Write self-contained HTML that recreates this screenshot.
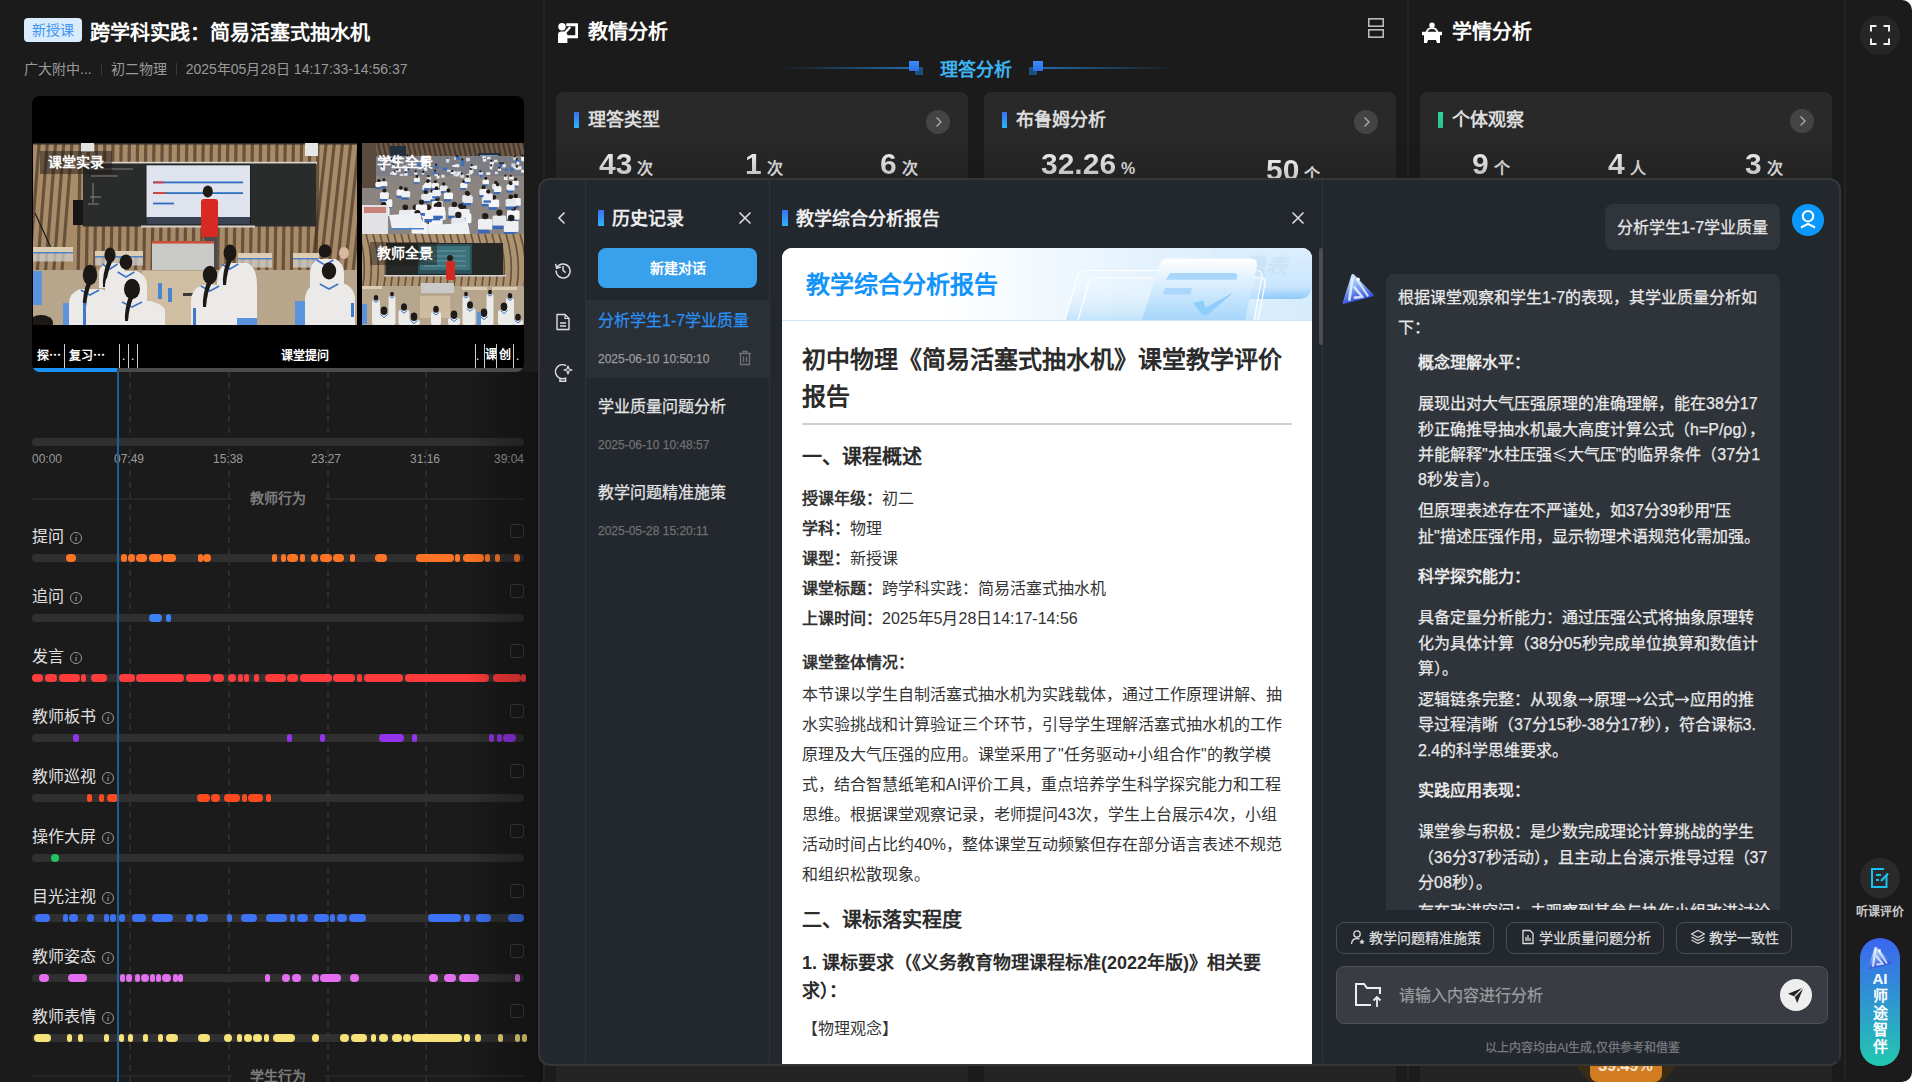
<!DOCTYPE html><html lang="zh-CN"><head><meta charset="utf-8"><title>课堂分析</title><style>
*{margin:0;padding:0;box-sizing:border-box}
html,body{width:1912px;height:1082px;overflow:hidden;background:#fff}
body{font-family:"Liberation Sans",sans-serif;color:#fff;position:relative}
.a{position:absolute;white-space:nowrap}

.ar{display:inline-block;transform:scaleX(1.9);margin:0 3px}
.le{display:inline-block;transform:scale(1.3,1.1);margin:0 2px}
#page{position:absolute;left:0;top:0;width:1912px;height:1082px;background:#1b1b1b;border-radius:0 10px 10px 0;overflow:hidden}
</style></head><body><div id="page">
<div class="a" style="left:24px;top:18px;width:58px;height:24px;background:#d9ecfd;border-radius:4px;color:#3d95f0;font-size:14px;line-height:24px;text-align:center">新授课</div>
<div class="a" style="left:90px;top:18px;font-size:20px;line-height:30px;font-weight:bold;color:#fff">跨学科实践：简易活塞式抽水机</div>
<div class="a" style="left:24px;top:58px;font-size:14px;line-height:22px;color:#9a9a9a">广大附中...<span style="display:inline-block;width:1px;height:12px;background:#3a3a3a;margin:0 9px;vertical-align:-1px"></span>初二物理<span style="display:inline-block;width:1px;height:12px;background:#3a3a3a;margin:0 9px;vertical-align:-1px"></span>2025年05月28日 14:17:33-14:56:37</div>
<div class="a" style="left:543px;top:0;width:2px;height:1082px;background:#242424"></div>
<div class="a" style="left:1407px;top:0;width:2px;height:1082px;background:#242424"></div>
<div class="a" style="left:1844px;top:0;width:2px;height:1082px;background:#242424"></div>
<div class="a" style="left:32px;top:96px;width:492px;height:276px;background:#000;border-radius:8px;overflow:hidden"><div class="a" style="left:1px;top:47px;width:324px;height:182px;overflow:hidden"><div style="filter:blur(0.5px)"><svg width="324" height="182" viewBox="0 0 324 182"><rect width="324" height="182" fill="#a88b68"/><polygon points="-20.0,0 -16.8,0 -26.8,127 -30.0,127" fill="#3e2c1c" opacity="0.6"/><polygon points="-11.8,0 -8.6,0 -18.6,127 -21.8,127" fill="#3e2c1c" opacity="0.6"/><polygon points="-3.6,0 -0.4,0 -10.4,127 -13.6,127" fill="#3e2c1c" opacity="0.6"/><polygon points="4.6,0 7.8,0 -2.2,127 -5.4,127" fill="#3e2c1c" opacity="0.6"/><polygon points="12.8,0 16.0,0 6.0,127 2.8,127" fill="#3e2c1c" opacity="0.6"/><polygon points="21.0,0 24.2,0 14.2,127 11.0,127" fill="#3e2c1c" opacity="0.6"/><polygon points="29.2,0 32.4,0 22.4,127 19.2,127" fill="#3e2c1c" opacity="0.6"/><polygon points="37.4,0 40.6,0 30.6,127 27.4,127" fill="#3e2c1c" opacity="0.6"/><polygon points="45.6,0 48.8,0 46.8,127 43.6,127" fill="#3e2c1c" opacity="0.6"/><polygon points="53.8,0 57.0,0 55.0,127 51.8,127" fill="#3e2c1c" opacity="0.6"/><polygon points="62.0,0 65.2,0 63.2,127 60.0,127" fill="#3e2c1c" opacity="0.6"/><polygon points="70.2,0 73.4,0 71.4,127 68.2,127" fill="#3e2c1c" opacity="0.6"/><polygon points="78.4,0 81.6,0 79.6,127 76.4,127" fill="#3e2c1c" opacity="0.6"/><polygon points="86.6,0 89.8,0 87.8,127 84.6,127" fill="#3e2c1c" opacity="0.6"/><polygon points="94.8,0 98.0,0 96.0,127 92.8,127" fill="#3e2c1c" opacity="0.6"/><polygon points="103.0,0 106.2,0 104.2,127 101.0,127" fill="#3e2c1c" opacity="0.6"/><polygon points="111.2,0 114.4,0 112.4,127 109.2,127" fill="#3e2c1c" opacity="0.6"/><polygon points="119.4,0 122.6,0 120.6,127 117.4,127" fill="#3e2c1c" opacity="0.6"/><polygon points="127.6,0 130.8,0 128.8,127 125.6,127" fill="#3e2c1c" opacity="0.6"/><polygon points="135.8,0 139.0,0 137.0,127 133.8,127" fill="#3e2c1c" opacity="0.6"/><polygon points="144.0,0 147.2,0 145.2,127 142.0,127" fill="#3e2c1c" opacity="0.6"/><polygon points="152.2,0 155.4,0 153.4,127 150.2,127" fill="#3e2c1c" opacity="0.6"/><polygon points="160.4,0 163.6,0 161.6,127 158.4,127" fill="#3e2c1c" opacity="0.6"/><polygon points="168.6,0 171.8,0 169.8,127 166.6,127" fill="#3e2c1c" opacity="0.6"/><polygon points="176.8,0 180.0,0 178.0,127 174.8,127" fill="#3e2c1c" opacity="0.6"/><polygon points="185.0,0 188.2,0 186.2,127 183.0,127" fill="#3e2c1c" opacity="0.6"/><polygon points="193.2,0 196.4,0 194.4,127 191.2,127" fill="#3e2c1c" opacity="0.6"/><polygon points="201.4,0 204.6,0 202.6,127 199.4,127" fill="#3e2c1c" opacity="0.6"/><polygon points="209.6,0 212.8,0 210.8,127 207.6,127" fill="#3e2c1c" opacity="0.6"/><polygon points="217.8,0 221.0,0 219.0,127 215.8,127" fill="#3e2c1c" opacity="0.6"/><polygon points="226.0,0 229.2,0 227.2,127 224.0,127" fill="#3e2c1c" opacity="0.6"/><polygon points="234.2,0 237.4,0 235.4,127 232.2,127" fill="#3e2c1c" opacity="0.6"/><polygon points="242.4,0 245.6,0 243.6,127 240.4,127" fill="#3e2c1c" opacity="0.6"/><polygon points="250.6,0 253.8,0 251.8,127 248.6,127" fill="#3e2c1c" opacity="0.6"/><polygon points="258.8,0 262.0,0 260.0,127 256.8,127" fill="#3e2c1c" opacity="0.6"/><polygon points="267.0,0 270.2,0 268.2,127 265.0,127" fill="#3e2c1c" opacity="0.6"/><polygon points="275.2,0 278.4,0 276.4,127 273.2,127" fill="#3e2c1c" opacity="0.6"/><polygon points="283.4,0 286.6,0 284.6,127 281.4,127" fill="#3e2c1c" opacity="0.6"/><polygon points="291.6,0 294.8,0 280.8,127 277.6,127" fill="#3e2c1c" opacity="0.6"/><polygon points="299.8,0 303.0,0 289.0,127 285.8,127" fill="#3e2c1c" opacity="0.6"/><polygon points="308.0,0 311.2,0 297.2,127 294.0,127" fill="#3e2c1c" opacity="0.6"/><polygon points="316.2,0 319.4,0 305.4,127 302.2,127" fill="#3e2c1c" opacity="0.6"/><polygon points="324.4,0 327.6,0 313.6,127 310.4,127" fill="#3e2c1c" opacity="0.6"/><polygon points="332.6,0 335.8,0 321.8,127 318.6,127" fill="#3e2c1c" opacity="0.6"/><polygon points="340.8,0 344.0,0 330.0,127 326.8,127" fill="#3e2c1c" opacity="0.6"/><rect x="0" y="0" width="324" height="1.5" fill="#2a2a2a"/><rect x="48" y="0" width="13" height="9" fill="#e2e2e2"/><rect x="272" y="0" width="13" height="13" fill="#e6e6e6"/><rect x="49" y="18.8" width="235" height="2" fill="#d6d6d2"/><rect x="50" y="20.5" width="233" height="63" fill="#2a2c2b"/><rect x="112.5" y="21.3" width="105.5" height="59.7" fill="#1c1e22"/><rect x="113.5" y="22.3" width="103.5" height="52" fill="#dfe3ee"/><rect x="113.5" y="74" width="103.5" height="7" fill="#3a4150"/><rect x="120" y="38.5" width="90" height="1.8" fill="#2f6fc0"/><rect x="120" y="38.5" width="11" height="1.8" fill="#d8403a"/><rect x="120" y="49.2" width="90" height="1.8" fill="#2f6fc0"/><rect x="120" y="49.2" width="13" height="1.8" fill="#d8403a"/><rect x="120" y="59.6" width="21" height="1.8" fill="#2f6fc0"/><path d="M55 26H100M58 33H85M60 40V60M57 54H68M55 61H66" stroke="#9a9a98" stroke-width="0.8" fill="none"/><rect x="40" y="57" width="10" height="25" fill="#161616"/><rect x="108" y="82.5" width="114" height="2" fill="#cfcfcf"/><path d="M2 70L18 105" stroke="#1a1a1a" stroke-width="1.2"/><rect x="0" y="127" width="324" height="55" fill="#b7a58c"/><ellipse cx="174.8" cy="48.6" rx="5" ry="6" fill="#231a16"/><rect x="168" y="56" width="17" height="39" rx="3" fill="#d82a22"/><rect x="171" y="94" width="13" height="32" fill="#4a4c50"/><rect x="119" y="98" width="62" height="4" fill="#c8503a"/><rect x="119" y="100.6" width="62" height="26.4" fill="#cacbc9"/><rect x="0" y="104" width="40" height="5" fill="#dccdb4"/><rect x="0" y="109" width="40" height="1.5" fill="#4a86d0"/><rect x="0" y="110.5" width="40" height="8" fill="#d6d6d4" opacity=".7"/><rect x="62" y="108" width="48" height="5" fill="#dccdb4"/><rect x="62" y="113" width="48" height="1.5" fill="#4a86d0"/><rect x="62" y="114.5" width="48" height="8" fill="#d6d6d4" opacity=".7"/><rect x="205" y="110" width="34" height="5" fill="#dccdb4"/><rect x="205" y="115" width="34" height="1.5" fill="#4a86d0"/><rect x="205" y="116.5" width="34" height="8" fill="#d6d6d4" opacity=".7"/><rect x="260" y="110" width="26" height="5" fill="#dccdb4"/><rect x="260" y="115" width="26" height="1.5" fill="#4a86d0"/><rect x="260" y="116.5" width="26" height="8" fill="#d6d6d4" opacity=".7"/><rect x="0" y="0" width="0" height="0"/><polygon points="110,128 180,128 188,182 100,182" fill="#cfbea2"/><rect x="125" y="140" width="4" height="16" fill="#4a86d0"/><rect x="135" y="145" width="4" height="14" fill="#4a86d0"/><rect x="150" y="150" width="12" height="3" fill="#3a3a3a"/><rect x="0" y="128" width="9" height="34" fill="#5b93dc"/><rect x="200" y="158" width="24" height="24" fill="#5b93dc"/><rect x="262" y="158" width="20" height="24" fill="#5b93dc"/><rect x="30" y="160" width="12" height="22" fill="#5b93dc"/><path d="M72.5 120H85.5Q92 124 92 130.0V145H66V130.0Q66 124 72.5 120Z" fill="#ebeae8"/><path d="M69.4 121L77.0 126L84.6 121" stroke="#3f74c4" stroke-width="1.6" fill="none"/><ellipse cx="77" cy="112" rx="5.6" ry="7.6" fill="#1b1816"/><path d="M75 116Q69 132 70 144L73 144Q74 130 79 119Z" fill="#1b1816"/><path d="M82.5 128H103.5Q114 132 114 141.6V162H72V141.6Q72 132 82.5 128Z" fill="#ebeae8"/><path d="M84.6 129L93.0 134L101.4 129" stroke="#3f74c4" stroke-width="1.6" fill="none"/><ellipse cx="93" cy="119" rx="6.4" ry="7.6" fill="#1b1816"/><path d="M194.0 120H214.0Q224 124 224 142.0V175H184V142.0Q184 124 194.0 120Z" fill="#ebeae8"/><path d="M188.6 121L197.0 126L205.4 121" stroke="#3f74c4" stroke-width="1.6" fill="none"/><ellipse cx="197" cy="110" rx="6.4" ry="8.5" fill="#1b1816"/><path d="M195 114Q189 130 190 142L193 142Q194 128 199 117Z" fill="#1b1816"/><path d="M285.5 116H302.5Q311 120 311 130.4V152H277V130.4Q277 120 285.5 116Z" fill="#ebeae8"/><path d="M283.6 117L292.0 122L300.4 117" stroke="#3f74c4" stroke-width="1.6" fill="none"/><ellipse cx="292" cy="108" rx="6.4" ry="6.8" fill="#1b1816"/><ellipse cx="311" cy="110" rx="5" ry="6" fill="#d8b8a0"/><path d="M47.0 146H69.0Q80 150 80 160.4V182H36V160.4Q36 150 47.0 146Z" fill="#ebeae8"/><path d="M47.8 147L57.0 152L66.2 147" stroke="#3f74c4" stroke-width="1.6" fill="none"/><ellipse cx="57" cy="132" rx="7.2" ry="10.2" fill="#1b1816"/><path d="M55 136Q49 152 50 164L53 164Q54 150 59 139Z" fill="#1b1816"/><path d="M88.5 158H117.5Q132 162 132 167.6V182H74V167.6Q74 162 88.5 158Z" fill="#ebeae8"/><path d="M89.0 159L99.0 164L109.0 159" stroke="#3f74c4" stroke-width="1.6" fill="none"/><ellipse cx="99" cy="146" rx="8.0" ry="10.2" fill="#1b1816"/><path d="M97 150Q91 166 92 178L95 178Q96 164 101 153Z" fill="#1b1816"/><path d="M169.5 142H192.5Q204 146 204 158.0V182H158V158.0Q158 146 169.5 142Z" fill="#ebeae8"/><path d="M167.8 143L177.0 148L186.2 143" stroke="#3f74c4" stroke-width="1.6" fill="none"/><ellipse cx="177" cy="132" rx="7.2" ry="9.3" fill="#1b1816"/><path d="M175 136Q169 152 170 164L173 164Q174 150 179 139Z" fill="#1b1816"/><path d="M284.5 140H309.5Q322 144 322 156.8V182H272V156.8Q272 144 284.5 140Z" fill="#ebeae8"/><path d="M286.8 141L296.0 146L305.2 141" stroke="#3f74c4" stroke-width="1.6" fill="none"/><ellipse cx="296" cy="128" rx="7.2" ry="8.5" fill="#1b1816"/><rect x="50" y="160" width="3" height="22" fill="#3f7ac8"/><rect x="160" y="165" width="3" height="17" fill="#3f7ac8"/><rect x="318" y="160" width="3" height="14" fill="#3f7ac8"/><ellipse cx="8" cy="180" rx="12" ry="8" fill="#1b1816"/></svg></div></div><div class="a" style="left:330px;top:47px;width:162px;height:91px;overflow:hidden"><div style="filter:blur(0.4px)"><svg width="162" height="91" viewBox="0 0 162 91"><rect width="162" height="91" fill="#8a8580"/><rect x="0" y="0" width="162" height="13" fill="#6e5a48"/><polygon points="0,0 2,0 5,13 3,13" fill="#3b2c22" opacity="0.75"/><polygon points="5,0 7,0 10,13 8,13" fill="#3b2c22" opacity="0.75"/><polygon points="10,0 12,0 15,13 13,13" fill="#3b2c22" opacity="0.75"/><polygon points="15,0 17,0 20,13 18,13" fill="#3b2c22" opacity="0.75"/><polygon points="20,0 22,0 25,13 23,13" fill="#3b2c22" opacity="0.75"/><polygon points="25,0 27,0 30,13 28,13" fill="#3b2c22" opacity="0.75"/><polygon points="30,0 32,0 35,13 33,13" fill="#3b2c22" opacity="0.75"/><polygon points="35,0 37,0 40,13 38,13" fill="#3b2c22" opacity="0.75"/><polygon points="40,0 42,0 45,13 43,13" fill="#3b2c22" opacity="0.75"/><polygon points="45,0 47,0 50,13 48,13" fill="#3b2c22" opacity="0.75"/><polygon points="50,0 52,0 55,13 53,13" fill="#3b2c22" opacity="0.75"/><polygon points="55,0 57,0 60,13 58,13" fill="#3b2c22" opacity="0.75"/><polygon points="60,0 62,0 65,13 63,13" fill="#3b2c22" opacity="0.75"/><polygon points="65,0 67,0 70,13 68,13" fill="#3b2c22" opacity="0.75"/><polygon points="70,0 72,0 75,13 73,13" fill="#3b2c22" opacity="0.75"/><polygon points="75,0 77,0 80,13 78,13" fill="#3b2c22" opacity="0.75"/><polygon points="80,0 82,0 85,13 83,13" fill="#3b2c22" opacity="0.75"/><polygon points="85,0 87,0 90,13 88,13" fill="#3b2c22" opacity="0.75"/><polygon points="90,0 92,0 95,13 93,13" fill="#3b2c22" opacity="0.75"/><polygon points="95,0 97,0 100,13 98,13" fill="#3b2c22" opacity="0.75"/><polygon points="100,0 102,0 105,13 103,13" fill="#3b2c22" opacity="0.75"/><polygon points="105,0 107,0 110,13 108,13" fill="#3b2c22" opacity="0.75"/><polygon points="110,0 112,0 115,13 113,13" fill="#3b2c22" opacity="0.75"/><polygon points="115,0 117,0 120,13 118,13" fill="#3b2c22" opacity="0.75"/><polygon points="120,0 122,0 125,13 123,13" fill="#3b2c22" opacity="0.75"/><polygon points="125,0 127,0 130,13 128,13" fill="#3b2c22" opacity="0.75"/><polygon points="130,0 132,0 135,13 133,13" fill="#3b2c22" opacity="0.75"/><polygon points="135,0 137,0 140,13 138,13" fill="#3b2c22" opacity="0.75"/><polygon points="140,0 142,0 145,13 143,13" fill="#3b2c22" opacity="0.75"/><polygon points="145,0 147,0 150,13 148,13" fill="#3b2c22" opacity="0.75"/><polygon points="150,0 152,0 155,13 153,13" fill="#3b2c22" opacity="0.75"/><polygon points="155,0 157,0 160,13 158,13" fill="#3b2c22" opacity="0.75"/><polygon points="160,0 162,0 165,13 163,13" fill="#3b2c22" opacity="0.75"/><rect x="0" y="0" width="14" height="45" fill="#5a4a3e"/><rect x="28" y="3" width="16" height="12" fill="#243040"/><rect x="116" y="10" width="22" height="10" fill="#233040"/><rect x="118" y="12" width="18" height="6" fill="#6a9ac0"/><rect x="14" y="13" width="148" height="20" fill="#7c7c84"/><rect x="81.0" y="24.8" width="4.3" height="2.7" fill="#3a6ec0"/><rect x="42.1" y="29.9" width="3.5" height="2.9" fill="#e2e6ee"/><circle cx="43.6" cy="29.1" r="1.1" fill="#221c18"/><rect x="58.9" y="14.9" width="4.1" height="3.0" fill="#eceef2"/><rect x="72.6" y="22.5" width="4.0" height="3.0" fill="#3a6ec0"/><circle cx="74.1" cy="21.7" r="1.1" fill="#221c18"/><rect x="92.2" y="14.3" width="2.9" height="2.4" fill="#eceef2"/><rect x="62.3" y="25.4" width="2.9" height="2.4" fill="#f4f4f6"/><circle cx="63.8" cy="24.6" r="1.1" fill="#221c18"/><rect x="112.0" y="22.6" width="3.1" height="3.5" fill="#eceef2"/><rect x="60.7" y="17.8" width="3.1" height="2.1" fill="#eceef2"/><circle cx="62.2" cy="17.0" r="1.1" fill="#221c18"/><rect x="139.3" y="21.1" width="4.4" height="3.3" fill="#eceef2"/><circle cx="140.8" cy="20.3" r="1.1" fill="#221c18"/><rect x="151.2" y="14.1" width="3.3" height="3.1" fill="#d4d8e0"/><circle cx="152.7" cy="13.3" r="1.1" fill="#221c18"/><rect x="107.2" y="29.3" width="3.0" height="2.1" fill="#f4f4f6"/><circle cx="108.7" cy="28.5" r="1.1" fill="#221c18"/><rect x="74.7" y="32.4" width="2.8" height="3.1" fill="#eceef2"/><circle cx="76.2" cy="31.6" r="1.1" fill="#221c18"/><rect x="132.0" y="16.7" width="3.6" height="2.7" fill="#e2e6ee"/><rect x="127.9" y="21.8" width="3.3" height="2.6" fill="#e2e6ee"/><circle cx="129.4" cy="21.0" r="1.1" fill="#221c18"/><rect x="141.9" y="33.5" width="3.7" height="3.5" fill="#eceef2"/><circle cx="143.4" cy="32.7" r="1.1" fill="#221c18"/><rect x="72.4" y="30.9" width="3.8" height="2.2" fill="#e2e6ee"/><circle cx="73.9" cy="30.1" r="1.1" fill="#221c18"/><rect x="52.2" y="29.2" width="3.2" height="2.4" fill="#eceef2"/><circle cx="53.7" cy="28.4" r="1.1" fill="#221c18"/><rect x="44.9" y="26.4" width="2.5" height="2.6" fill="#3a6ec0"/><circle cx="46.4" cy="25.6" r="1.1" fill="#221c18"/><rect x="156.0" y="23.2" width="3.6" height="3.3" fill="#e2e6ee"/><rect x="60.0" y="17.8" width="3.7" height="3.1" fill="#e2e6ee"/><rect x="153.2" y="17.1" width="4.4" height="3.3" fill="#3a6ec0"/><circle cx="154.7" cy="16.3" r="1.1" fill="#221c18"/><rect x="21.0" y="15.3" width="3.5" height="2.4" fill="#d4d8e0"/><circle cx="22.5" cy="14.5" r="1.1" fill="#221c18"/><rect x="135.9" y="25.5" width="3.1" height="2.3" fill="#eceef2"/><circle cx="137.4" cy="24.7" r="1.1" fill="#221c18"/><rect x="84.9" y="26.7" width="3.7" height="2.1" fill="#e2e6ee"/><rect x="44.2" y="13.3" width="3.0" height="2.7" fill="#eceef2"/><circle cx="45.7" cy="12.5" r="1.1" fill="#221c18"/><rect x="55.7" y="24.2" width="4.4" height="2.1" fill="#e2e6ee"/><rect x="159.1" y="26.8" width="3.9" height="2.9" fill="#e2e6ee"/><rect x="150.7" y="23.0" width="3.2" height="2.5" fill="#eceef2"/><circle cx="152.2" cy="22.2" r="1.1" fill="#221c18"/><rect x="108.2" y="23.1" width="4.0" height="2.5" fill="#eceef2"/><circle cx="109.7" cy="22.3" r="1.1" fill="#221c18"/><rect x="94.8" y="28.5" width="4.3" height="3.1" fill="#e2e6ee"/><rect x="149.4" y="20.4" width="3.9" height="3.4" fill="#d4d8e0"/><rect x="18.5" y="23.5" width="2.5" height="3.0" fill="#d4d8e0"/><rect x="104.1" y="14.7" width="3.8" height="3.5" fill="#d4d8e0"/><rect x="71.5" y="28.4" width="3.7" height="2.7" fill="#3a6ec0"/><circle cx="73.0" cy="27.6" r="1.1" fill="#221c18"/><rect x="125.0" y="13.6" width="3.7" height="2.7" fill="#e2e6ee"/><rect x="30.7" y="29.4" width="3.8" height="2.7" fill="#eceef2"/><circle cx="32.2" cy="28.6" r="1.1" fill="#221c18"/><rect x="35.2" y="25.8" width="3.5" height="3.1" fill="#f4f4f6"/><rect x="79.4" y="31.7" width="3.2" height="3.0" fill="#e2e6ee"/><rect x="132.9" y="28.8" width="2.9" height="2.3" fill="#e2e6ee"/><rect x="60.8" y="15.9" width="3.5" height="3.3" fill="#eceef2"/><rect x="154.6" y="18.8" width="2.8" height="2.7" fill="#f4f4f6"/><rect x="137.0" y="21.0" width="3.5" height="3.0" fill="#3a6ec0"/><circle cx="138.5" cy="20.2" r="1.1" fill="#221c18"/><rect x="25.1" y="13.7" width="4.2" height="2.1" fill="#f4f4f6"/><rect x="59.7" y="29.6" width="2.5" height="2.2" fill="#d4d8e0"/><circle cx="61.2" cy="28.8" r="1.1" fill="#221c18"/><rect x="127.8" y="18.6" width="4.1" height="3.2" fill="#eceef2"/><circle cx="129.3" cy="17.8" r="1.1" fill="#221c18"/><rect x="107.2" y="26.8" width="4.1" height="3.4" fill="#e2e6ee"/><circle cx="108.7" cy="26.0" r="1.1" fill="#221c18"/><rect x="84.3" y="16.8" width="2.5" height="2.7" fill="#eceef2"/><circle cx="85.8" cy="16.0" r="1.1" fill="#221c18"/><rect x="54.3" y="20.3" width="3.9" height="2.8" fill="#3a6ec0"/><rect x="37.6" y="30.8" width="3.9" height="2.3" fill="#d4d8e0"/><rect x="120.9" y="15.7" width="3.4" height="2.9" fill="#eceef2"/><circle cx="122.4" cy="14.9" r="1.1" fill="#221c18"/><rect x="98.2" y="31.5" width="4.1" height="3.4" fill="#d4d8e0"/><circle cx="99.7" cy="30.7" r="1.1" fill="#221c18"/><rect x="159.4" y="15.1" width="4.2" height="3.2" fill="#eceef2"/><circle cx="160.9" cy="14.3" r="1.1" fill="#221c18"/><rect x="147.2" y="33.6" width="4.5" height="2.8" fill="#f4f4f6"/><circle cx="148.7" cy="32.8" r="1.1" fill="#221c18"/><rect x="120.3" y="13.3" width="3.5" height="2.1" fill="#f4f4f6"/><rect x="127.7" y="23.2" width="2.6" height="3.2" fill="#eceef2"/><circle cx="129.2" cy="22.4" r="1.1" fill="#221c18"/><rect x="19.2" y="24.2" width="3.9" height="3.4" fill="#d4d8e0"/><circle cx="20.7" cy="23.4" r="1.1" fill="#221c18"/><rect x="90.4" y="28.2" width="4.2" height="3.0" fill="#d4d8e0"/><rect x="116.0" y="28.9" width="3.4" height="2.8" fill="#3a6ec0"/><rect x="91.4" y="30.7" width="3.6" height="2.5" fill="#d4d8e0"/><rect x="142.8" y="25.8" width="3.1" height="2.2" fill="#3a6ec0"/><rect x="98.8" y="17.2" width="3.6" height="2.8" fill="#3a6ec0"/><circle cx="100.3" cy="16.4" r="1.1" fill="#221c18"/><rect x="93.7" y="13.9" width="4.3" height="2.8" fill="#3a6ec0"/><circle cx="95.2" cy="13.1" r="1.1" fill="#221c18"/><rect x="27.8" y="16.5" width="4.4" height="2.7" fill="#d4d8e0"/><circle cx="29.3" cy="15.7" r="1.1" fill="#221c18"/><rect x="84.0" y="15.7" width="3.4" height="3.2" fill="#d4d8e0"/><rect x="30.1" y="21.8" width="2.6" height="2.4" fill="#eceef2"/><circle cx="31.6" cy="21.0" r="1.1" fill="#221c18"/><rect x="37.0" y="13.2" width="3.1" height="3.1" fill="#e2e6ee"/><rect x="29.5" y="28.3" width="2.7" height="2.8" fill="#f4f4f6"/><rect x="117.8" y="31.5" width="2.5" height="2.9" fill="#3a6ec0"/><rect x="93.7" y="31.1" width="3.6" height="2.3" fill="#e2e6ee"/><rect x="104.5" y="31.0" width="3.0" height="3.1" fill="#f4f4f6"/><rect x="60.7" y="19.6" width="4.3" height="2.3" fill="#e2e6ee"/><rect x="33.8" y="18.0" width="4.0" height="2.4" fill="#eceef2"/><circle cx="35.3" cy="17.2" r="1.1" fill="#221c18"/><rect x="153.3" y="24.4" width="3.9" height="2.3" fill="#eceef2"/><circle cx="154.8" cy="23.6" r="1.1" fill="#221c18"/><rect x="98.3" y="20.5" width="4.1" height="2.5" fill="#3a6ec0"/><rect x="64.8" y="34.0" width="4.2" height="3.2" fill="#d4d8e0"/><circle cx="66.3" cy="33.2" r="1.1" fill="#221c18"/><rect x="19.5" y="24.6" width="3.5" height="2.9" fill="#e2e6ee"/><circle cx="21.0" cy="23.8" r="1.1" fill="#221c18"/><rect x="31.0" y="16.6" width="2.8" height="2.4" fill="#eceef2"/><rect x="33.9" y="27.3" width="2.7" height="2.1" fill="#d4d8e0"/><circle cx="35.4" cy="26.5" r="1.1" fill="#221c18"/><rect x="90.3" y="22.0" width="3.7" height="2.0" fill="#eceef2"/><rect x="40.8" y="22.5" width="4.0" height="2.6" fill="#e2e6ee"/><rect x="28.0" y="29.6" width="3.1" height="2.1" fill="#d4d8e0"/><rect x="42.3" y="25.3" width="3.2" height="3.1" fill="#f4f4f6"/><rect x="124.2" y="29.3" width="4.1" height="2.6" fill="#f4f4f6"/><rect x="116.8" y="29.1" width="4.0" height="2.6" fill="#e2e6ee"/><circle cx="118.3" cy="28.3" r="1.1" fill="#221c18"/><rect x="64.6" y="22.8" width="2.5" height="2.5" fill="#3a6ec0"/><circle cx="66.1" cy="22.0" r="1.1" fill="#221c18"/><rect x="54.4" y="33.2" width="3.1" height="2.3" fill="#d4d8e0"/><rect x="92.9" y="21.2" width="4.5" height="3.0" fill="#eceef2"/><rect x="159.1" y="13.5" width="3.7" height="3.1" fill="#f4f4f6"/><circle cx="160.6" cy="12.7" r="1.1" fill="#221c18"/><rect x="88.7" y="29.0" width="3.8" height="2.0" fill="#f4f4f6"/><circle cx="90.2" cy="28.2" r="1.1" fill="#221c18"/><rect x="148.0" y="24.6" width="3.5" height="3.5" fill="#3a6ec0"/><rect x="19.9" y="56.2" width="10.4" height="7.8" rx="1.5" fill="#f5f5f7"/><rect x="19.9" y="64.0" width="8.4" height="2.6" fill="#3a68b8"/><circle cx="25.1" cy="54.1" r="2.3" fill="#231d19"/><rect x="15.6" y="63.9" width="12.0" height="9.0" rx="1.5" fill="#eef0f3"/><rect x="15.6" y="72.9" width="9.6" height="3.0" fill="#3a68b8"/><circle cx="21.6" cy="61.5" r="2.7" fill="#231d19"/><rect x="61.0" y="80.9" width="15.4" height="11.5" rx="1.5" fill="#e6e9ee"/><rect x="61.0" y="92.5" width="12.3" height="3.8" fill="#3a68b8"/><circle cx="68.7" cy="77.9" r="3.5" fill="#231d19"/><rect x="77.9" y="42.5" width="7.7" height="5.8" rx="1.5" fill="#e6e9ee"/><rect x="77.9" y="48.2" width="6.2" height="1.9" fill="#3a68b8"/><circle cx="81.7" cy="40.9" r="1.7" fill="#231d19"/><rect x="86.4" y="63.8" width="12.0" height="9.0" rx="1.5" fill="#e6e9ee"/><rect x="86.4" y="72.8" width="9.6" height="3.0" fill="#3a68b8"/><circle cx="92.4" cy="61.4" r="2.7" fill="#231d19"/><rect x="148.6" y="55.0" width="10.2" height="7.7" rx="1.5" fill="#f5f5f7"/><rect x="148.6" y="62.7" width="8.2" height="2.6" fill="#3a68b8"/><circle cx="153.7" cy="53.0" r="2.3" fill="#231d19"/><rect x="66.0" y="49.6" width="9.1" height="6.8" rx="1.5" fill="#f5f5f7"/><rect x="66.0" y="56.5" width="7.3" height="2.3" fill="#3a68b8"/><circle cx="70.6" cy="47.8" r="2.1" fill="#231d19"/><rect x="47.2" y="66.8" width="12.6" height="9.4" rx="1.5" fill="#f5f5f7"/><rect x="47.2" y="76.2" width="10.0" height="3.1" fill="#3a68b8"/><circle cx="53.4" cy="64.2" r="2.8" fill="#231d19"/><rect x="145.0" y="67.2" width="12.6" height="9.5" rx="1.5" fill="#f5f5f7"/><rect x="145.0" y="76.7" width="10.1" height="3.2" fill="#3a68b8"/><circle cx="151.3" cy="64.7" r="2.8" fill="#231d19"/><rect x="51.9" y="34.7" width="6.1" height="4.6" rx="1.5" fill="#eef0f3"/><rect x="51.9" y="39.3" width="4.9" height="1.5" fill="#3a68b8"/><circle cx="55.0" cy="33.5" r="1.4" fill="#231d19"/><rect x="92.9" y="65.6" width="12.3" height="9.2" rx="1.5" fill="#e6e9ee"/><rect x="92.9" y="74.9" width="9.9" height="3.1" fill="#3a68b8"/><circle cx="99.0" cy="63.2" r="2.8" fill="#231d19"/><rect x="119.8" y="53.5" width="9.9" height="7.4" rx="1.5" fill="#e6e9ee"/><rect x="119.8" y="60.9" width="7.9" height="2.5" fill="#3a68b8"/><circle cx="124.7" cy="51.5" r="2.2" fill="#231d19"/><rect x="120.5" y="36.5" width="6.5" height="4.9" rx="1.5" fill="#f5f5f7"/><rect x="120.5" y="41.4" width="5.2" height="1.6" fill="#3a68b8"/><circle cx="123.8" cy="35.2" r="1.5" fill="#231d19"/><rect x="150.2" y="37.7" width="6.7" height="5.1" rx="1.5" fill="#eef0f3"/><rect x="150.2" y="42.7" width="5.4" height="1.7" fill="#3a68b8"/><circle cx="153.6" cy="36.3" r="1.5" fill="#231d19"/><rect x="69.9" y="57.9" width="10.8" height="8.1" rx="1.5" fill="#eef0f3"/><rect x="69.9" y="66.0" width="8.6" height="2.7" fill="#3a68b8"/><circle cx="75.3" cy="55.7" r="2.4" fill="#231d19"/><rect x="13.4" y="38.9" width="7.0" height="5.2" rx="1.5" fill="#f5f5f7"/><rect x="13.4" y="44.2" width="5.6" height="1.7" fill="#3a68b8"/><circle cx="16.9" cy="37.5" r="1.6" fill="#231d19"/><rect x="144.5" y="41.2" width="7.4" height="5.6" rx="1.5" fill="#eef0f3"/><rect x="144.5" y="46.8" width="6.0" height="1.9" fill="#3a68b8"/><circle cx="148.2" cy="39.7" r="1.7" fill="#231d19"/><rect x="98.2" y="39.8" width="7.2" height="5.4" rx="1.5" fill="#f5f5f7"/><rect x="98.2" y="45.1" width="5.7" height="1.8" fill="#3a68b8"/><circle cx="101.8" cy="38.3" r="1.6" fill="#231d19"/><rect x="69.8" y="39.9" width="7.2" height="5.4" rx="1.5" fill="#eef0f3"/><rect x="69.8" y="45.3" width="5.7" height="1.8" fill="#3a68b8"/><circle cx="73.4" cy="38.5" r="1.6" fill="#231d19"/><rect x="60.4" y="41.7" width="7.5" height="5.7" rx="1.5" fill="#e6e9ee"/><rect x="60.4" y="47.4" width="6.0" height="1.9" fill="#3a68b8"/><circle cx="64.2" cy="40.2" r="1.7" fill="#231d19"/><rect x="71.0" y="67.4" width="12.7" height="9.5" rx="1.5" fill="#e6e9ee"/><rect x="71.0" y="76.9" width="10.1" height="3.2" fill="#3a68b8"/><circle cx="77.3" cy="64.9" r="2.9" fill="#231d19"/><rect x="95.2" y="66.0" width="12.4" height="9.3" rx="1.5" fill="#f5f5f7"/><rect x="95.2" y="75.3" width="9.9" height="3.1" fill="#3a68b8"/><circle cx="101.4" cy="63.5" r="2.8" fill="#231d19"/><rect x="66.9" y="72.9" width="13.8" height="10.3" rx="1.5" fill="#f5f5f7"/><rect x="66.9" y="83.2" width="11.0" height="3.4" fill="#3a68b8"/><circle cx="73.8" cy="70.1" r="3.1" fill="#231d19"/><rect x="130.2" y="40.8" width="7.4" height="5.5" rx="1.5" fill="#e6e9ee"/><rect x="130.2" y="46.4" width="5.9" height="1.8" fill="#3a68b8"/><circle cx="133.9" cy="39.4" r="1.7" fill="#231d19"/><rect x="117.4" y="45.9" width="8.4" height="6.3" rx="1.5" fill="#eef0f3"/><rect x="117.4" y="52.2" width="6.7" height="2.1" fill="#3a68b8"/><circle cx="121.6" cy="44.2" r="1.9" fill="#231d19"/><rect x="81.9" y="49.4" width="9.1" height="6.8" rx="1.5" fill="#f5f5f7"/><rect x="81.9" y="56.2" width="7.3" height="2.3" fill="#3a68b8"/><circle cx="86.4" cy="47.6" r="2.0" fill="#231d19"/><rect x="100.2" y="52.0" width="9.6" height="7.2" rx="1.5" fill="#e6e9ee"/><rect x="100.2" y="59.2" width="7.7" height="2.4" fill="#3a68b8"/><circle cx="105.0" cy="50.0" r="2.2" fill="#231d19"/><rect x="96.1" y="70.3" width="13.3" height="9.9" rx="1.5" fill="#f5f5f7"/><rect x="96.1" y="80.2" width="10.6" height="3.3" fill="#3a68b8"/><circle cx="102.7" cy="67.6" r="3.0" fill="#231d19"/><rect x="93.8" y="65.7" width="12.3" height="9.2" rx="1.5" fill="#eef0f3"/><rect x="93.8" y="74.9" width="9.9" height="3.1" fill="#3a68b8"/><circle cx="99.9" cy="63.2" r="2.8" fill="#231d19"/><rect x="34.6" y="46.4" width="8.5" height="6.4" rx="1.5" fill="#f5f5f7"/><rect x="34.6" y="52.8" width="6.8" height="2.1" fill="#3a68b8"/><circle cx="38.9" cy="44.8" r="1.9" fill="#231d19"/><rect x="141.8" y="77.9" width="14.8" height="11.1" rx="1.5" fill="#eef0f3"/><rect x="141.8" y="89.0" width="11.8" height="3.7" fill="#3a68b8"/><circle cx="149.2" cy="75.0" r="3.3" fill="#231d19"/><rect x="102.5" y="34.5" width="6.1" height="4.6" rx="1.5" fill="#e6e9ee"/><rect x="102.5" y="39.0" width="4.9" height="1.5" fill="#3a68b8"/><circle cx="105.5" cy="33.3" r="1.4" fill="#231d19"/><rect x="68.5" y="65.2" width="12.2" height="9.2" rx="1.5" fill="#eef0f3"/><rect x="68.5" y="74.3" width="9.8" height="3.1" fill="#3a68b8"/><circle cx="74.6" cy="62.7" r="2.8" fill="#231d19"/><rect x="39.4" y="47.9" width="8.8" height="6.6" rx="1.5" fill="#eef0f3"/><rect x="39.4" y="54.5" width="7.0" height="2.2" fill="#3a68b8"/><circle cx="43.8" cy="46.2" r="2.0" fill="#231d19"/><rect x="145.0" y="42.0" width="7.6" height="5.7" rx="1.5" fill="#eef0f3"/><rect x="145.0" y="47.7" width="6.1" height="1.9" fill="#3a68b8"/><circle cx="148.8" cy="40.5" r="1.7" fill="#231d19"/><rect x="101.1" y="52.7" width="9.7" height="7.3" rx="1.5" fill="#e6e9ee"/><rect x="101.1" y="60.0" width="7.8" height="2.4" fill="#3a68b8"/><circle cx="105.9" cy="50.7" r="2.2" fill="#231d19"/><rect x="59.1" y="50.9" width="9.4" height="7.0" rx="1.5" fill="#e6e9ee"/><rect x="59.1" y="57.9" width="7.5" height="2.3" fill="#3a68b8"/><circle cx="63.8" cy="49.0" r="2.1" fill="#231d19"/><rect x="116.0" y="75.9" width="14.4" height="10.8" rx="1.5" fill="#eef0f3"/><rect x="116.0" y="86.7" width="11.5" height="3.6" fill="#3a68b8"/><circle cx="123.2" cy="73.1" r="3.2" fill="#231d19"/><rect x="126.7" y="56.4" width="10.5" height="7.9" rx="1.5" fill="#f5f5f7"/><rect x="126.7" y="64.2" width="8.4" height="2.6" fill="#3a68b8"/><circle cx="131.9" cy="54.3" r="2.4" fill="#231d19"/><rect x="130.5" y="72.4" width="13.7" height="10.3" rx="1.5" fill="#e6e9ee"/><rect x="130.5" y="82.7" width="11.0" height="3.4" fill="#3a68b8"/><circle cx="137.4" cy="69.7" r="3.1" fill="#231d19"/><rect x="70.2" y="46.9" width="8.6" height="6.4" rx="1.5" fill="#eef0f3"/><rect x="70.2" y="53.3" width="6.9" height="2.1" fill="#3a68b8"/><circle cx="74.5" cy="45.2" r="1.9" fill="#231d19"/><rect x="59.8" y="66.7" width="12.5" height="9.4" rx="1.5" fill="#f5f5f7"/><rect x="59.8" y="76.1" width="10.0" height="3.1" fill="#3a68b8"/><circle cx="66.1" cy="64.2" r="2.8" fill="#231d19"/><rect x="53.7" y="61.4" width="11.5" height="8.6" rx="1.5" fill="#f5f5f7"/><rect x="53.7" y="70.0" width="9.2" height="2.9" fill="#3a68b8"/><circle cx="59.5" cy="59.1" r="2.6" fill="#231d19"/><rect x="131.7" y="43.2" width="7.8" height="5.9" rx="1.5" fill="#f5f5f7"/><rect x="131.7" y="49.1" width="6.3" height="2.0" fill="#3a68b8"/><circle cx="135.6" cy="41.6" r="1.8" fill="#231d19"/><rect x="62.6" y="38.9" width="7.0" height="5.2" rx="1.5" fill="#e6e9ee"/><rect x="62.6" y="44.1" width="5.6" height="1.7" fill="#3a68b8"/><circle cx="66.1" cy="37.5" r="1.6" fill="#231d19"/><rect x="18.5" y="38.2" width="6.8" height="5.1" rx="1.5" fill="#f5f5f7"/><rect x="18.5" y="43.3" width="5.5" height="1.7" fill="#3a68b8"/><circle cx="21.9" cy="36.8" r="1.5" fill="#231d19"/><rect x="89.3" y="74.8" width="14.2" height="10.6" rx="1.5" fill="#e6e9ee"/><rect x="89.3" y="85.4" width="11.3" height="3.5" fill="#3a68b8"/><circle cx="96.3" cy="71.9" r="3.2" fill="#231d19"/><rect x="48.6" y="72.8" width="13.8" height="10.3" rx="1.5" fill="#eef0f3"/><rect x="48.6" y="83.1" width="11.0" height="3.4" fill="#3a68b8"/><circle cx="55.4" cy="70.0" r="3.1" fill="#231d19"/><rect x="49.6" y="79.5" width="15.1" height="11.3" rx="1.5" fill="#f5f5f7"/><rect x="49.6" y="90.9" width="12.1" height="3.8" fill="#3a68b8"/><circle cx="57.1" cy="76.5" r="3.4" fill="#231d19"/><rect x="17.9" y="49.2" width="9.0" height="6.8" rx="1.5" fill="#f5f5f7"/><rect x="17.9" y="56.0" width="7.2" height="2.3" fill="#3a68b8"/><circle cx="22.4" cy="47.4" r="2.0" fill="#231d19"/><rect x="121.5" y="50.4" width="9.3" height="7.0" rx="1.5" fill="#eef0f3"/><rect x="121.5" y="57.4" width="7.4" height="2.3" fill="#3a68b8"/><circle cx="126.2" cy="48.5" r="2.1" fill="#231d19"/><rect x="37.0" y="66.9" width="12.6" height="9.4" rx="1.5" fill="#e6e9ee"/><rect x="37.0" y="76.3" width="10.1" height="3.1" fill="#3a68b8"/><circle cx="43.3" cy="64.3" r="2.8" fill="#231d19"/><rect x="62.1" y="39.9" width="7.2" height="5.4" rx="1.5" fill="#f5f5f7"/><rect x="62.1" y="45.2" width="5.7" height="1.8" fill="#3a68b8"/><circle cx="65.7" cy="38.4" r="1.6" fill="#231d19"/><rect x="71.1" y="63.7" width="11.9" height="9.0" rx="1.5" fill="#f5f5f7"/><rect x="71.1" y="72.7" width="9.6" height="3.0" fill="#3a68b8"/><circle cx="77.0" cy="61.3" r="2.7" fill="#231d19"/><rect x="143.6" y="55.9" width="10.4" height="7.8" rx="1.5" fill="#e6e9ee"/><rect x="143.6" y="63.7" width="8.3" height="2.6" fill="#3a68b8"/><circle cx="148.8" cy="53.8" r="2.3" fill="#231d19"/><rect x="0" y="62" width="26" height="29" fill="#e2e2e4"/><rect x="2" y="64" width="22" height="6" fill="#b8432e" opacity=".6"/><polygon points="27,72 58,70 62,84 30,86" fill="#eef0f4"/><polygon points="66,82 106,80 108,91 68,91" fill="#eef0f4"/><rect x="27" y="85" width="35" height="1.5" fill="#4a86d0"/></svg></div></div><div class="a" style="left:330px;top:138px;width:162px;height:91px;overflow:hidden"><div style="filter:blur(0.4px)"><svg width="162" height="91" viewBox="0 0 162 91"><rect width="162" height="91" fill="#ad9372"/><path d="M-10 0Q-2 25 -6 52" stroke="#4e3a28" stroke-width="1.6" fill="none" opacity="0.75"/><path d="M-3 0Q5 25 1 52" stroke="#4e3a28" stroke-width="1.6" fill="none" opacity="0.75"/><path d="M4 0Q12 25 8 52" stroke="#4e3a28" stroke-width="1.6" fill="none" opacity="0.75"/><path d="M11 0Q19 25 15 52" stroke="#4e3a28" stroke-width="1.6" fill="none" opacity="0.75"/><path d="M18 0Q26 25 22 52" stroke="#4e3a28" stroke-width="1.6" fill="none" opacity="0.75"/><path d="M25 0Q33 25 29 52" stroke="#4e3a28" stroke-width="1.6" fill="none" opacity="0.75"/><path d="M32 0Q40 25 36 52" stroke="#4e3a28" stroke-width="1.6" fill="none" opacity="0.75"/><path d="M39 0Q47 25 43 52" stroke="#4e3a28" stroke-width="1.6" fill="none" opacity="0.75"/><path d="M46 0Q54 25 50 52" stroke="#4e3a28" stroke-width="1.6" fill="none" opacity="0.75"/><path d="M53 0Q61 25 57 52" stroke="#4e3a28" stroke-width="1.6" fill="none" opacity="0.75"/><path d="M60 0Q68 25 64 52" stroke="#4e3a28" stroke-width="1.6" fill="none" opacity="0.75"/><path d="M67 0Q75 25 71 52" stroke="#4e3a28" stroke-width="1.6" fill="none" opacity="0.75"/><path d="M74 0Q82 25 78 52" stroke="#4e3a28" stroke-width="1.6" fill="none" opacity="0.75"/><path d="M81 0Q89 25 85 52" stroke="#4e3a28" stroke-width="1.6" fill="none" opacity="0.75"/><path d="M88 0Q96 25 92 52" stroke="#4e3a28" stroke-width="1.6" fill="none" opacity="0.75"/><path d="M95 0Q103 25 99 52" stroke="#4e3a28" stroke-width="1.6" fill="none" opacity="0.75"/><path d="M102 0Q110 25 106 52" stroke="#4e3a28" stroke-width="1.6" fill="none" opacity="0.75"/><path d="M109 0Q117 25 113 52" stroke="#4e3a28" stroke-width="1.6" fill="none" opacity="0.75"/><path d="M116 0Q124 25 120 52" stroke="#4e3a28" stroke-width="1.6" fill="none" opacity="0.75"/><path d="M123 0Q131 25 127 52" stroke="#4e3a28" stroke-width="1.6" fill="none" opacity="0.75"/><path d="M130 0Q138 25 134 52" stroke="#4e3a28" stroke-width="1.6" fill="none" opacity="0.75"/><path d="M137 0Q145 25 141 52" stroke="#4e3a28" stroke-width="1.6" fill="none" opacity="0.75"/><path d="M144 0Q152 25 148 52" stroke="#4e3a28" stroke-width="1.6" fill="none" opacity="0.75"/><path d="M151 0Q159 25 155 52" stroke="#4e3a28" stroke-width="1.6" fill="none" opacity="0.75"/><path d="M158 0Q166 25 162 52" stroke="#4e3a28" stroke-width="1.6" fill="none" opacity="0.75"/><path d="M165 0Q173 25 169 52" stroke="#4e3a28" stroke-width="1.6" fill="none" opacity="0.75"/><rect x="24" y="9" width="117" height="32" fill="#262827"/><rect x="56" y="10" width="54" height="30" fill="#2c5058"/><rect x="58" y="12" width="50" height="24" fill="#3f7480" opacity=".9"/><path d="M62 17H104M62 22H104M62 27H104M62 32H104" stroke="#9ac4cc" stroke-width="0.8" opacity=".6"/><rect x="22" y="41" width="122" height="1.5" fill="#d0d0d0"/><circle cx="88" cy="24" r="3" fill="#231a16"/><rect x="84" y="27" width="9" height="19" rx="2" fill="#d22a22"/><rect x="0" y="52" width="162" height="39" fill="#b7a68e"/><rect x="59" y="49" width="33" height="10" fill="#cacbc9"/><rect x="0" y="52" width="20" height="3" fill="#dccdb4"/><rect x="100" y="53" width="25" height="3" fill="#dccdb4"/><rect x="130" y="53" width="25" height="3" fill="#dccdb4"/><rect x="58" y="62" width="30" height="22" fill="#cdbca0"/><rect x="10" y="66" width="8" height="25" rx="2" fill="#ebebea"/><path d="M11.6 66.5L14 68.4L16.4 66.5" stroke="#3f74c4" stroke-width="1" fill="none"/><ellipse cx="14" cy="63.8" rx="2.2" ry="2.8" fill="#1d1a18"/><rect x="26.5" y="62" width="7.0" height="29" rx="2" fill="#ebebea"/><path d="M27.9 62.5L30 64.1L32.1 62.5" stroke="#3f74c4" stroke-width="1" fill="none"/><ellipse cx="30" cy="60.1" rx="1.9" ry="2.4" fill="#1d1a18"/><rect x="100.5" y="62" width="7.0" height="29" rx="2" fill="#ebebea"/><path d="M101.9 62.5L104 64.1L106.1 62.5" stroke="#3f74c4" stroke-width="1" fill="none"/><ellipse cx="104" cy="60.1" rx="1.9" ry="2.4" fill="#1d1a18"/><rect x="124.5" y="60" width="7.0" height="31" rx="2" fill="#ebebea"/><path d="M125.9 60.5L128 62.1L130.1 60.5" stroke="#3f74c4" stroke-width="1" fill="none"/><ellipse cx="128" cy="58.1" rx="1.9" ry="2.4" fill="#1d1a18"/><rect x="144" y="64" width="8" height="27" rx="2" fill="#ebebea"/><path d="M145.6 64.5L148 66.4L150.4 64.5" stroke="#3f74c4" stroke-width="1" fill="none"/><ellipse cx="148" cy="61.8" rx="2.2" ry="2.8" fill="#1d1a18"/><rect x="16" y="80" width="12" height="11" rx="2" fill="#ebebea"/><path d="M18.4 80.5L22 83.6L25.6 80.5" stroke="#3f74c4" stroke-width="1" fill="none"/><ellipse cx="22" cy="76.7" rx="3.3" ry="4.2" fill="#1d1a18"/><rect x="36.5" y="76" width="11.0" height="15" rx="2" fill="#ebebea"/><path d="M38.7 76.5L42 79.3L45.3 76.5" stroke="#3f74c4" stroke-width="1" fill="none"/><ellipse cx="42" cy="73.0" rx="3.0" ry="3.8" fill="#1d1a18"/><rect x="46" y="86" width="12" height="5" rx="2" fill="#ebebea"/><path d="M48.4 86.5L52 89.6L55.6 86.5" stroke="#3f74c4" stroke-width="1" fill="none"/><ellipse cx="52" cy="82.7" rx="3.3" ry="4.2" fill="#1d1a18"/><rect x="69" y="78" width="10" height="13" rx="2" fill="#ebebea"/><path d="M71.0 78.5L74 81.0L77.0 78.5" stroke="#3f74c4" stroke-width="1" fill="none"/><ellipse cx="74" cy="75.2" rx="2.8" ry="3.5" fill="#1d1a18"/><rect x="86" y="84" width="12" height="7" rx="2" fill="#ebebea"/><path d="M88.4 84.5L92 87.6L95.6 84.5" stroke="#3f74c4" stroke-width="1" fill="none"/><ellipse cx="92" cy="80.7" rx="3.3" ry="4.2" fill="#1d1a18"/><rect x="102.5" y="74" width="11.0" height="17" rx="2" fill="#ebebea"/><path d="M104.7 74.5L108 77.3L111.3 74.5" stroke="#3f74c4" stroke-width="1" fill="none"/><ellipse cx="108" cy="71.0" rx="3.0" ry="3.8" fill="#1d1a18"/><rect x="116" y="82" width="12" height="9" rx="2" fill="#ebebea"/><path d="M118.4 82.5L122 85.6L125.6 82.5" stroke="#3f74c4" stroke-width="1" fill="none"/><ellipse cx="122" cy="78.7" rx="3.3" ry="4.2" fill="#1d1a18"/><rect x="136" y="76" width="12" height="15" rx="2" fill="#ebebea"/><path d="M138.4 76.5L142 79.6L145.6 76.5" stroke="#3f74c4" stroke-width="1" fill="none"/><ellipse cx="142" cy="72.7" rx="3.3" ry="4.2" fill="#1d1a18"/><rect x="151" y="86" width="10" height="5" rx="2" fill="#ebebea"/><path d="M153.0 86.5L156 89.0L159.0 86.5" stroke="#3f74c4" stroke-width="1" fill="none"/><ellipse cx="156" cy="83.2" rx="2.8" ry="3.5" fill="#1d1a18"/><rect x="0" y="70" width="5" height="20" fill="#5b93dc"/><rect x="115" y="78" width="4" height="13" fill="#5b93dc"/></svg></div></div><div class="a" style="left:8px;top:55px;width:72px;height:23px;background:rgba(30,26,22,.5);"></div><div class="a" style="left:16px;top:55px;font-size:14px;line-height:22px;color:#fff;font-weight:bold">课堂实录</div><div class="a" style="left:345px;top:55px;font-size:14px;line-height:22px;color:#fff;font-weight:bold">学生全景</div><div class="a" style="left:338px;top:146px;width:67px;height:23px;background:rgba(30,26,22,.45);"></div><div class="a" style="left:345px;top:146px;font-size:14px;line-height:22px;color:#fff;font-weight:bold">教师全景</div><div class="a" style="left:31.5px;top:248px;width:1px;height:24px;background:#cfcfcf"></div><div class="a" style="left:86.5px;top:248px;width:1px;height:24px;background:#cfcfcf"></div><div class="a" style="left:96.0px;top:248px;width:1px;height:24px;background:#cfcfcf"></div><div class="a" style="left:105.0px;top:248px;width:1px;height:24px;background:#cfcfcf"></div><div class="a" style="left:442.5px;top:248px;width:1px;height:24px;background:#cfcfcf"></div><div class="a" style="left:452.0px;top:248px;width:1px;height:24px;background:#cfcfcf"></div><div class="a" style="left:464.0px;top:248px;width:1px;height:24px;background:#cfcfcf"></div><div class="a" style="left:481.0px;top:248px;width:1px;height:24px;background:#cfcfcf"></div><div class="a" style="left:5px;top:250px;font-size:12px;line-height:20px;color:#fff;font-weight:bold">探⋯</div><div class="a" style="left:37px;top:250px;font-size:12px;line-height:20px;color:#fff;font-weight:bold">复习⋯</div><div class="a" style="left:249px;top:250px;font-size:12px;line-height:20px;color:#fff;font-weight:bold">课堂提问</div><div class="a" style="left:90px;top:250px;font-size:12px;line-height:20px;color:#fff">.</div><div class="a" style="left:99px;top:250px;font-size:12px;line-height:20px;color:#fff">.</div><div class="a" style="left:444px;top:250px;font-size:12px;line-height:20px;color:#fff">.</div><div class="a" style="left:453px;top:249px;width:11px;overflow:hidden;font-size:12px;line-height:20px;color:#fff;font-weight:bold">课</div><div class="a" style="left:467px;top:249px;width:13px;overflow:hidden;font-size:12px;line-height:20px;color:#fff;font-weight:bold">创</div><div class="a" style="left:484px;top:250px;font-size:12px;line-height:20px;color:#fff">.</div><div class="a" style="left:0;top:272px;width:492px;height:4px;background:#4b4b4b"></div><div class="a" style="left:0;top:272px;width:85px;height:4px;background:#1b92f5"></div></div><div class="a" style="left:129.0px;top:372px;width:2px;height:710px;background:repeating-linear-gradient(to bottom,#2c2c2c 0,#2c2c2c 6px,transparent 6px,transparent 11px)"></div><div class="a" style="left:228.0px;top:372px;width:2px;height:710px;background:repeating-linear-gradient(to bottom,#2c2c2c 0,#2c2c2c 6px,transparent 6px,transparent 11px)"></div><div class="a" style="left:326.5px;top:372px;width:2px;height:710px;background:repeating-linear-gradient(to bottom,#2c2c2c 0,#2c2c2c 6px,transparent 6px,transparent 11px)"></div><div class="a" style="left:425.0px;top:372px;width:2px;height:710px;background:repeating-linear-gradient(to bottom,#2c2c2c 0,#2c2c2c 6px,transparent 6px,transparent 11px)"></div><div class="a" style="left:32px;top:438px;width:492px;height:8px;border-radius:4px;background:#303030"></div><div class="a" style="left:32px;top:451px;font-size:12px;line-height:16px;color:#9a9a9a">00:00</div><div class="a" style="left:99px;width:60px;text-align:center;top:451px;font-size:12px;line-height:16px;color:#9a9a9a">07:49</div><div class="a" style="left:198px;width:60px;text-align:center;top:451px;font-size:12px;line-height:16px;color:#9a9a9a">15:38</div><div class="a" style="left:296px;width:60px;text-align:center;top:451px;font-size:12px;line-height:16px;color:#9a9a9a">23:27</div><div class="a" style="left:395px;width:60px;text-align:center;top:451px;font-size:12px;line-height:16px;color:#9a9a9a">31:16</div><div class="a" style="left:464px;width:60px;text-align:right;top:451px;font-size:12px;line-height:16px;color:#9a9a9a">39:04</div><div class="a" style="left:32px;top:498px;width:200px;height:2px;background:#262626"></div><div class="a" style="left:324px;top:498px;width:200px;height:2px;background:#262626"></div><div class="a" style="left:228px;top:488px;width:100px;text-align:center;font-size:14px;line-height:20px;color:#7d7d7d;font-weight:bold">教师行为</div><div class="a" style="left:32px;top:525px;font-size:16px;line-height:24px;color:#e0e0e0">提问<span style="display:inline-block;width:12px;height:12px;border:1px solid #9a9a9a;border-radius:50%;margin-left:6px;vertical-align:1px;font-size:9px;line-height:10px;text-align:center;color:#bbb;font-style:italic;font-family:'Liberation Serif',serif">i</span></div><div class="a" style="left:510px;top:524px;width:14px;height:14px;border:1px solid #3e3e3e;border-radius:3px"></div><div class="a" style="left:32px;top:554px;width:492px;height:8px;border-radius:4px;background:#303030"></div><div class="a" style="left:66.0px;top:554px;width:10.0px;height:8px;border-radius:4px;background:#ff7424"></div><div class="a" style="left:121.0px;top:554px;width:6.4px;height:8px;border-radius:4px;background:#ff7424"></div><div class="a" style="left:128.0px;top:554px;width:6.6px;height:8px;border-radius:4px;background:#ff7424"></div><div class="a" style="left:136.0px;top:554px;width:11.0px;height:8px;border-radius:4px;background:#ff7424"></div><div class="a" style="left:149.0px;top:554px;width:13.0px;height:8px;border-radius:4px;background:#ff7424"></div><div class="a" style="left:162.5px;top:554px;width:5.0px;height:8px;border-radius:4px;background:#ff7424"></div><div class="a" style="left:165.0px;top:554px;width:11.4px;height:8px;border-radius:4px;background:#ff7424"></div><div class="a" style="left:198.0px;top:554px;width:5.0px;height:8px;border-radius:4px;background:#ff7424"></div><div class="a" style="left:202.6px;top:554px;width:8.2px;height:8px;border-radius:4px;background:#ff7424"></div><div class="a" style="left:272.0px;top:554px;width:5.0px;height:8px;border-radius:4px;background:#ff7424"></div><div class="a" style="left:281.0px;top:554px;width:5.0px;height:8px;border-radius:4px;background:#ff7424"></div><div class="a" style="left:287.0px;top:554px;width:11.0px;height:8px;border-radius:4px;background:#ff7424"></div><div class="a" style="left:300.0px;top:554px;width:5.0px;height:8px;border-radius:4px;background:#ff7424"></div><div class="a" style="left:311.0px;top:554px;width:7.0px;height:8px;border-radius:4px;background:#ff7424"></div><div class="a" style="left:320.0px;top:554px;width:12.0px;height:8px;border-radius:4px;background:#ff7424"></div><div class="a" style="left:333.0px;top:554px;width:11.0px;height:8px;border-radius:4px;background:#ff7424"></div><div class="a" style="left:350.0px;top:554px;width:5.0px;height:8px;border-radius:4px;background:#ff7424"></div><div class="a" style="left:375.0px;top:554px;width:12.0px;height:8px;border-radius:4px;background:#ff7424"></div><div class="a" style="left:416.0px;top:554px;width:38.0px;height:8px;border-radius:4px;background:#ff7424"></div><div class="a" style="left:455.0px;top:554px;width:5.0px;height:8px;border-radius:4px;background:#ff7424"></div><div class="a" style="left:463.0px;top:554px;width:21.0px;height:8px;border-radius:4px;background:#ff7424"></div><div class="a" style="left:485.0px;top:554px;width:5.0px;height:8px;border-radius:4px;background:#ff7424"></div><div class="a" style="left:495.0px;top:554px;width:5.0px;height:8px;border-radius:4px;background:#ff7424"></div><div class="a" style="left:514.0px;top:554px;width:6.0px;height:8px;border-radius:4px;background:#ff7424"></div><div class="a" style="left:32px;top:585px;font-size:16px;line-height:24px;color:#e0e0e0">追问<span style="display:inline-block;width:12px;height:12px;border:1px solid #9a9a9a;border-radius:50%;margin-left:6px;vertical-align:1px;font-size:9px;line-height:10px;text-align:center;color:#bbb;font-style:italic;font-family:'Liberation Serif',serif">i</span></div><div class="a" style="left:510px;top:584px;width:14px;height:14px;border:1px solid #3e3e3e;border-radius:3px"></div><div class="a" style="left:32px;top:614px;width:492px;height:8px;border-radius:4px;background:#303030"></div><div class="a" style="left:149.0px;top:614px;width:13.0px;height:8px;border-radius:4px;background:#3b82f6"></div><div class="a" style="left:166.0px;top:614px;width:5.0px;height:8px;border-radius:4px;background:#3b82f6"></div><div class="a" style="left:32px;top:645px;font-size:16px;line-height:24px;color:#e0e0e0">发言<span style="display:inline-block;width:12px;height:12px;border:1px solid #9a9a9a;border-radius:50%;margin-left:6px;vertical-align:1px;font-size:9px;line-height:10px;text-align:center;color:#bbb;font-style:italic;font-family:'Liberation Serif',serif">i</span></div><div class="a" style="left:510px;top:644px;width:14px;height:14px;border:1px solid #3e3e3e;border-radius:3px"></div><div class="a" style="left:32px;top:674px;width:492px;height:8px;border-radius:4px;background:#303030"></div><div class="a" style="left:32.0px;top:674px;width:11.0px;height:8px;border-radius:4px;background:#ff3b3b"></div><div class="a" style="left:45.4px;top:674px;width:12.1px;height:8px;border-radius:4px;background:#ff3b3b"></div><div class="a" style="left:59.4px;top:674px;width:20.3px;height:8px;border-radius:4px;background:#ff3b3b"></div><div class="a" style="left:81.0px;top:674px;width:5.0px;height:8px;border-radius:4px;background:#ff3b3b"></div><div class="a" style="left:91.0px;top:674px;width:16.0px;height:8px;border-radius:4px;background:#ff3b3b"></div><div class="a" style="left:119.0px;top:674px;width:15.6px;height:8px;border-radius:4px;background:#ff3b3b"></div><div class="a" style="left:136.0px;top:674px;width:48.0px;height:8px;border-radius:4px;background:#ff3b3b"></div><div class="a" style="left:186.0px;top:674px;width:25.0px;height:8px;border-radius:4px;background:#ff3b3b"></div><div class="a" style="left:213.0px;top:674px;width:10.5px;height:8px;border-radius:4px;background:#ff3b3b"></div><div class="a" style="left:228.0px;top:674px;width:8.0px;height:8px;border-radius:4px;background:#ff3b3b"></div><div class="a" style="left:238.0px;top:674px;width:5.0px;height:8px;border-radius:4px;background:#ff3b3b"></div><div class="a" style="left:244.4px;top:674px;width:5.0px;height:8px;border-radius:4px;background:#ff3b3b"></div><div class="a" style="left:254.0px;top:674px;width:5.0px;height:8px;border-radius:4px;background:#ff3b3b"></div><div class="a" style="left:265.0px;top:674px;width:21.0px;height:8px;border-radius:4px;background:#ff3b3b"></div><div class="a" style="left:287.0px;top:674px;width:11.0px;height:8px;border-radius:4px;background:#ff3b3b"></div><div class="a" style="left:300.0px;top:674px;width:32.0px;height:8px;border-radius:4px;background:#ff3b3b"></div><div class="a" style="left:333.0px;top:674px;width:22.0px;height:8px;border-radius:4px;background:#ff3b3b"></div><div class="a" style="left:357.0px;top:674px;width:5.0px;height:8px;border-radius:4px;background:#ff3b3b"></div><div class="a" style="left:364.0px;top:674px;width:39.0px;height:8px;border-radius:4px;background:#ff3b3b"></div><div class="a" style="left:405.0px;top:674px;width:84.0px;height:8px;border-radius:4px;background:#ff3b3b"></div><div class="a" style="left:493.0px;top:674px;width:28.0px;height:8px;border-radius:4px;background:#ff3b3b"></div><div class="a" style="left:521.0px;top:674px;width:5.0px;height:8px;border-radius:4px;background:#ff3b3b"></div><div class="a" style="left:32px;top:705px;font-size:16px;line-height:24px;color:#e0e0e0">教师板书<span style="display:inline-block;width:12px;height:12px;border:1px solid #9a9a9a;border-radius:50%;margin-left:6px;vertical-align:1px;font-size:9px;line-height:10px;text-align:center;color:#bbb;font-style:italic;font-family:'Liberation Serif',serif">i</span></div><div class="a" style="left:510px;top:704px;width:14px;height:14px;border:1px solid #3e3e3e;border-radius:3px"></div><div class="a" style="left:32px;top:734px;width:492px;height:8px;border-radius:4px;background:#303030"></div><div class="a" style="left:72.6px;top:734px;width:6.4px;height:8px;border-radius:4px;background:#9333ea"></div><div class="a" style="left:286.8px;top:734px;width:5.5px;height:8px;border-radius:4px;background:#9333ea"></div><div class="a" style="left:319.7px;top:734px;width:5.8px;height:8px;border-radius:4px;background:#9333ea"></div><div class="a" style="left:379.0px;top:734px;width:25.0px;height:8px;border-radius:4px;background:#9333ea"></div><div class="a" style="left:411.8px;top:734px;width:5.2px;height:8px;border-radius:4px;background:#9333ea"></div><div class="a" style="left:489.0px;top:734px;width:5.0px;height:8px;border-radius:4px;background:#9333ea"></div><div class="a" style="left:497.0px;top:734px;width:5.0px;height:8px;border-radius:4px;background:#9333ea"></div><div class="a" style="left:503.0px;top:734px;width:13.0px;height:8px;border-radius:4px;background:#9333ea"></div><div class="a" style="left:32px;top:765px;font-size:16px;line-height:24px;color:#e0e0e0">教师巡视<span style="display:inline-block;width:12px;height:12px;border:1px solid #9a9a9a;border-radius:50%;margin-left:6px;vertical-align:1px;font-size:9px;line-height:10px;text-align:center;color:#bbb;font-style:italic;font-family:'Liberation Serif',serif">i</span></div><div class="a" style="left:510px;top:764px;width:14px;height:14px;border:1px solid #3e3e3e;border-radius:3px"></div><div class="a" style="left:32px;top:794px;width:492px;height:8px;border-radius:4px;background:#303030"></div><div class="a" style="left:87.0px;top:794px;width:5.2px;height:8px;border-radius:4px;background:#ff4a1f"></div><div class="a" style="left:98.8px;top:794px;width:5.2px;height:8px;border-radius:4px;background:#ff4a1f"></div><div class="a" style="left:106.6px;top:794px;width:11.8px;height:8px;border-radius:4px;background:#ff4a1f"></div><div class="a" style="left:196.8px;top:794px;width:13.2px;height:8px;border-radius:4px;background:#ff4a1f"></div><div class="a" style="left:211.0px;top:794px;width:9.0px;height:8px;border-radius:4px;background:#ff4a1f"></div><div class="a" style="left:224.0px;top:794px;width:16.0px;height:8px;border-radius:4px;background:#ff4a1f"></div><div class="a" style="left:241.8px;top:794px;width:5.2px;height:8px;border-radius:4px;background:#ff4a1f"></div><div class="a" style="left:247.8px;top:794px;width:15.2px;height:8px;border-radius:4px;background:#ff4a1f"></div><div class="a" style="left:265.9px;top:794px;width:5.1px;height:8px;border-radius:4px;background:#ff4a1f"></div><div class="a" style="left:32px;top:825px;font-size:16px;line-height:24px;color:#e0e0e0">操作大屏<span style="display:inline-block;width:12px;height:12px;border:1px solid #9a9a9a;border-radius:50%;margin-left:6px;vertical-align:1px;font-size:9px;line-height:10px;text-align:center;color:#bbb;font-style:italic;font-family:'Liberation Serif',serif">i</span></div><div class="a" style="left:510px;top:824px;width:14px;height:14px;border:1px solid #3e3e3e;border-radius:3px"></div><div class="a" style="left:32px;top:854px;width:492px;height:8px;border-radius:4px;background:#303030"></div><div class="a" style="left:51.0px;top:854px;width:8.0px;height:8px;border-radius:4px;background:#22c55e"></div><div class="a" style="left:32px;top:885px;font-size:16px;line-height:24px;color:#e0e0e0">目光注视<span style="display:inline-block;width:12px;height:12px;border:1px solid #9a9a9a;border-radius:50%;margin-left:6px;vertical-align:1px;font-size:9px;line-height:10px;text-align:center;color:#bbb;font-style:italic;font-family:'Liberation Serif',serif">i</span></div><div class="a" style="left:510px;top:884px;width:14px;height:14px;border:1px solid #3e3e3e;border-radius:3px"></div><div class="a" style="left:32px;top:914px;width:492px;height:8px;border-radius:4px;background:#303030"></div><div class="a" style="left:35.0px;top:914px;width:15.0px;height:8px;border-radius:4px;background:#3d72f5"></div><div class="a" style="left:63.0px;top:914px;width:5.0px;height:8px;border-radius:4px;background:#3d72f5"></div><div class="a" style="left:69.0px;top:914px;width:9.0px;height:8px;border-radius:4px;background:#3d72f5"></div><div class="a" style="left:87.3px;top:914px;width:6.5px;height:8px;border-radius:4px;background:#3d72f5"></div><div class="a" style="left:104.0px;top:914px;width:5.0px;height:8px;border-radius:4px;background:#3d72f5"></div><div class="a" style="left:110.0px;top:914px;width:6.0px;height:8px;border-radius:4px;background:#3d72f5"></div><div class="a" style="left:119.0px;top:914px;width:6.0px;height:8px;border-radius:4px;background:#3d72f5"></div><div class="a" style="left:132.0px;top:914px;width:13.7px;height:8px;border-radius:4px;background:#3d72f5"></div><div class="a" style="left:152.0px;top:914px;width:21.0px;height:8px;border-radius:4px;background:#3d72f5"></div><div class="a" style="left:186.0px;top:914px;width:6.8px;height:8px;border-radius:4px;background:#3d72f5"></div><div class="a" style="left:196.0px;top:914px;width:11.8px;height:8px;border-radius:4px;background:#3d72f5"></div><div class="a" style="left:227.0px;top:914px;width:5.0px;height:8px;border-radius:4px;background:#3d72f5"></div><div class="a" style="left:241.0px;top:914px;width:16.0px;height:8px;border-radius:4px;background:#3d72f5"></div><div class="a" style="left:266.0px;top:914px;width:21.0px;height:8px;border-radius:4px;background:#3d72f5"></div><div class="a" style="left:290.0px;top:914px;width:5.0px;height:8px;border-radius:4px;background:#3d72f5"></div><div class="a" style="left:297.0px;top:914px;width:11.0px;height:8px;border-radius:4px;background:#3d72f5"></div><div class="a" style="left:314.0px;top:914px;width:15.0px;height:8px;border-radius:4px;background:#3d72f5"></div><div class="a" style="left:330.0px;top:914px;width:5.0px;height:8px;border-radius:4px;background:#3d72f5"></div><div class="a" style="left:337.0px;top:914px;width:9.7px;height:8px;border-radius:4px;background:#3d72f5"></div><div class="a" style="left:349.0px;top:914px;width:17.0px;height:8px;border-radius:4px;background:#3d72f5"></div><div class="a" style="left:428.0px;top:914px;width:33.0px;height:8px;border-radius:4px;background:#3d72f5"></div><div class="a" style="left:464.0px;top:914px;width:6.0px;height:8px;border-radius:4px;background:#3d72f5"></div><div class="a" style="left:476.0px;top:914px;width:15.0px;height:8px;border-radius:4px;background:#3d72f5"></div><div class="a" style="left:508.0px;top:914px;width:16.0px;height:8px;border-radius:4px;background:#3d72f5"></div><div class="a" style="left:32px;top:945px;font-size:16px;line-height:24px;color:#e0e0e0">教师姿态<span style="display:inline-block;width:12px;height:12px;border:1px solid #9a9a9a;border-radius:50%;margin-left:6px;vertical-align:1px;font-size:9px;line-height:10px;text-align:center;color:#bbb;font-style:italic;font-family:'Liberation Serif',serif">i</span></div><div class="a" style="left:510px;top:944px;width:14px;height:14px;border:1px solid #3e3e3e;border-radius:3px"></div><div class="a" style="left:32px;top:974px;width:492px;height:8px;border-radius:4px;background:#303030"></div><div class="a" style="left:39.0px;top:974px;width:9.8px;height:8px;border-radius:4px;background:#e36ef0"></div><div class="a" style="left:68.4px;top:974px;width:18.3px;height:8px;border-radius:4px;background:#e36ef0"></div><div class="a" style="left:120.0px;top:974px;width:5.0px;height:8px;border-radius:4px;background:#e36ef0"></div><div class="a" style="left:126.0px;top:974px;width:6.0px;height:8px;border-radius:4px;background:#e36ef0"></div><div class="a" style="left:135.0px;top:974px;width:5.0px;height:8px;border-radius:4px;background:#e36ef0"></div><div class="a" style="left:141.0px;top:974px;width:8.0px;height:8px;border-radius:4px;background:#e36ef0"></div><div class="a" style="left:150.0px;top:974px;width:5.0px;height:8px;border-radius:4px;background:#e36ef0"></div><div class="a" style="left:156.0px;top:974px;width:5.0px;height:8px;border-radius:4px;background:#e36ef0"></div><div class="a" style="left:161.5px;top:974px;width:9.5px;height:8px;border-radius:4px;background:#e36ef0"></div><div class="a" style="left:172.5px;top:974px;width:5.0px;height:8px;border-radius:4px;background:#e36ef0"></div><div class="a" style="left:178.0px;top:974px;width:5.0px;height:8px;border-radius:4px;background:#e36ef0"></div><div class="a" style="left:264.8px;top:974px;width:5.2px;height:8px;border-radius:4px;background:#e36ef0"></div><div class="a" style="left:282.0px;top:974px;width:8.0px;height:8px;border-radius:4px;background:#e36ef0"></div><div class="a" style="left:292.0px;top:974px;width:9.0px;height:8px;border-radius:4px;background:#e36ef0"></div><div class="a" style="left:312.0px;top:974px;width:7.0px;height:8px;border-radius:4px;background:#e36ef0"></div><div class="a" style="left:320.0px;top:974px;width:21.0px;height:8px;border-radius:4px;background:#e36ef0"></div><div class="a" style="left:350.0px;top:974px;width:9.0px;height:8px;border-radius:4px;background:#e36ef0"></div><div class="a" style="left:429.0px;top:974px;width:9.0px;height:8px;border-radius:4px;background:#e36ef0"></div><div class="a" style="left:444.0px;top:974px;width:12.0px;height:8px;border-radius:4px;background:#e36ef0"></div><div class="a" style="left:459.0px;top:974px;width:20.0px;height:8px;border-radius:4px;background:#e36ef0"></div><div class="a" style="left:515.0px;top:974px;width:5.0px;height:8px;border-radius:4px;background:#e36ef0"></div><div class="a" style="left:32px;top:1005px;font-size:16px;line-height:24px;color:#e0e0e0">教师表情<span style="display:inline-block;width:12px;height:12px;border:1px solid #9a9a9a;border-radius:50%;margin-left:6px;vertical-align:1px;font-size:9px;line-height:10px;text-align:center;color:#bbb;font-style:italic;font-family:'Liberation Serif',serif">i</span></div><div class="a" style="left:510px;top:1004px;width:14px;height:14px;border:1px solid #3e3e3e;border-radius:3px"></div><div class="a" style="left:32px;top:1034px;width:492px;height:8px;border-radius:4px;background:#303030"></div><div class="a" style="left:34.0px;top:1034px;width:17.0px;height:8px;border-radius:4px;background:#f7e27a"></div><div class="a" style="left:67.0px;top:1034px;width:5.0px;height:8px;border-radius:4px;background:#f7e27a"></div><div class="a" style="left:78.0px;top:1034px;width:5.0px;height:8px;border-radius:4px;background:#f7e27a"></div><div class="a" style="left:104.0px;top:1034px;width:5.0px;height:8px;border-radius:4px;background:#f7e27a"></div><div class="a" style="left:118.6px;top:1034px;width:5.4px;height:8px;border-radius:4px;background:#f7e27a"></div><div class="a" style="left:128.0px;top:1034px;width:5.0px;height:8px;border-radius:4px;background:#f7e27a"></div><div class="a" style="left:143.0px;top:1034px;width:5.0px;height:8px;border-radius:4px;background:#f7e27a"></div><div class="a" style="left:158.0px;top:1034px;width:5.0px;height:8px;border-radius:4px;background:#f7e27a"></div><div class="a" style="left:166.0px;top:1034px;width:12.0px;height:8px;border-radius:4px;background:#f7e27a"></div><div class="a" style="left:198.0px;top:1034px;width:12.0px;height:8px;border-radius:4px;background:#f7e27a"></div><div class="a" style="left:224.0px;top:1034px;width:8.0px;height:8px;border-radius:4px;background:#f7e27a"></div><div class="a" style="left:237.0px;top:1034px;width:5.0px;height:8px;border-radius:4px;background:#f7e27a"></div><div class="a" style="left:244.0px;top:1034px;width:8.0px;height:8px;border-radius:4px;background:#f7e27a"></div><div class="a" style="left:253.0px;top:1034px;width:9.0px;height:8px;border-radius:4px;background:#f7e27a"></div><div class="a" style="left:264.0px;top:1034px;width:5.0px;height:8px;border-radius:4px;background:#f7e27a"></div><div class="a" style="left:273.0px;top:1034px;width:22.0px;height:8px;border-radius:4px;background:#f7e27a"></div><div class="a" style="left:312.0px;top:1034px;width:7.0px;height:8px;border-radius:4px;background:#f7e27a"></div><div class="a" style="left:340.0px;top:1034px;width:9.0px;height:8px;border-radius:4px;background:#f7e27a"></div><div class="a" style="left:351.0px;top:1034px;width:16.0px;height:8px;border-radius:4px;background:#f7e27a"></div><div class="a" style="left:371.0px;top:1034px;width:5.0px;height:8px;border-radius:4px;background:#f7e27a"></div><div class="a" style="left:379.0px;top:1034px;width:9.0px;height:8px;border-radius:4px;background:#f7e27a"></div><div class="a" style="left:392.0px;top:1034px;width:9.7px;height:8px;border-radius:4px;background:#f7e27a"></div><div class="a" style="left:403.0px;top:1034px;width:7.6px;height:8px;border-radius:4px;background:#f7e27a"></div><div class="a" style="left:412.0px;top:1034px;width:49.6px;height:8px;border-radius:4px;background:#f7e27a"></div><div class="a" style="left:464.0px;top:1034px;width:6.0px;height:8px;border-radius:4px;background:#f7e27a"></div><div class="a" style="left:475.0px;top:1034px;width:6.0px;height:8px;border-radius:4px;background:#f7e27a"></div><div class="a" style="left:498.0px;top:1034px;width:5.0px;height:8px;border-radius:4px;background:#f7e27a"></div><div class="a" style="left:515.0px;top:1034px;width:5.0px;height:8px;border-radius:4px;background:#f7e27a"></div><div class="a" style="left:522.0px;top:1034px;width:5.0px;height:8px;border-radius:4px;background:#f7e27a"></div><div class="a" style="left:32px;top:1075px;width:200px;height:2px;background:#262626"></div><div class="a" style="left:324px;top:1075px;width:200px;height:2px;background:#262626"></div><div class="a" style="left:228px;top:1066px;width:100px;text-align:center;font-size:14px;line-height:20px;color:#7d7d7d;font-weight:bold">学生行为</div><div class="a" style="left:117px;top:372px;width:2px;height:710px;background:#1c5f94"></div><div class="a" style="left:465px;top:372px;width:78px;height:710px;background:linear-gradient(to right,rgba(0,0,0,0),rgba(0,0,0,.18) 45%,rgba(0,0,0,.33))"></div><div class="a" style="left:558px;top:23px;width:20px;height:20px"><svg width="20" height="20" viewBox="0 0 20 20"><circle cx="4" cy="3.8" r="3.7" fill="#fff"/><path d="M8.2 0.3H20.3V15.3H8.6V12.3H17.3V3.3H8.2Z" fill="#fff"/><path d="M6.8 10L11.6 4.8" stroke="#fff" stroke-width="2.3" stroke-linecap="round"/><path d="M0 20V12Q0 8.6 3.4 8.6H6.5L9.4 11.2V20Z" fill="#fff"/></svg></div><div class="a" style="left:588px;top:17px;font-size:20px;line-height:30px;font-weight:bold;color:#fff">教情分析</div><div class="a" style="left:1368px;top:18px;width:17px;height:20px"><svg width="17" height="20" viewBox="0 0 17 20"><rect x="0.8" y="0.8" width="14.4" height="7.4" fill="none" stroke="#bbb" stroke-width="1.6"/><rect x="0.8" y="11.8" width="14.4" height="7.4" fill="none" stroke="#bbb" stroke-width="1.6"/></svg></div><div class="a" style="left:780px;top:67px;width:129px;height:2px;background:linear-gradient(to right,rgba(30,90,150,0),#1f6aa8)"></div><div class="a" style="left:1043px;top:67px;width:132px;height:2px;background:linear-gradient(to left,rgba(30,90,150,0),#1f6aa8)"></div><div class="a" style="left:915px;top:67px;width:8px;height:8px;background:#1f4f80"></div><div class="a" style="left:909px;top:61px;width:10px;height:10px;background:linear-gradient(#3b8bff,#2f6fe0)"></div><div class="a" style="left:1029px;top:67px;width:8px;height:8px;background:#1f4f80"></div><div class="a" style="left:1033px;top:61px;width:10px;height:10px;background:linear-gradient(#3b8bff,#2f6fe0)"></div><div class="a" style="left:940px;top:57px;font-size:18px;line-height:27px;font-weight:bold;color:#3fb4f2">理答分析</div><div class="a" style="left:556px;top:92px;width:412px;height:200px;border-radius:8px;background:#292929"></div><div class="a" style="left:574px;top:112px;width:5px;height:16px;background:linear-gradient(#3b6ff5,#27b8f5)"></div><div class="a" style="left:588px;top:107px;font-size:18px;line-height:26px;font-weight:bold;color:#dcdcdc">理答类型</div><div class="a" style="left:984px;top:92px;width:412px;height:200px;border-radius:8px;background:#292929"></div><div class="a" style="left:1002px;top:112px;width:5px;height:16px;background:linear-gradient(#3b6ff5,#27b8f5)"></div><div class="a" style="left:1016px;top:107px;font-size:18px;line-height:26px;font-weight:bold;color:#dcdcdc">布鲁姆分析</div><div class="a" style="left:1420px;top:92px;width:412px;height:200px;border-radius:8px;background:#292929"></div><div class="a" style="left:1438px;top:112px;width:5px;height:16px;background:linear-gradient(#2fd39a,#29c08c)"></div><div class="a" style="left:1452px;top:107px;font-size:18px;line-height:26px;font-weight:bold;color:#dcdcdc">个体观察</div><div class="a" style="left:556px;top:135px;width:1276px;height:43px;background:linear-gradient(rgba(27,27,27,0),rgba(20,20,20,.3))"></div><div class="a" style="left:926px;top:110px;width:24px;height:24px;border-radius:50%;background:#444"><svg width="24" height="24" viewBox="0 0 24 24" style="position:absolute;left:0;top:0"><path d="M10.5 7.5L15 12L10.5 16.5" fill="none" stroke="#aaa" stroke-width="1.4"/></svg></div><div class="a" style="left:1354px;top:110px;width:24px;height:24px;border-radius:50%;background:#444"><svg width="24" height="24" viewBox="0 0 24 24" style="position:absolute;left:0;top:0"><path d="M10.5 7.5L15 12L10.5 16.5" fill="none" stroke="#aaa" stroke-width="1.4"/></svg></div><div class="a" style="left:1790px;top:109px;width:24px;height:24px;border-radius:50%;background:#444"><svg width="24" height="24" viewBox="0 0 24 24" style="position:absolute;left:0;top:0"><path d="M10.5 7.5L15 12L10.5 16.5" fill="none" stroke="#aaa" stroke-width="1.4"/></svg></div><div class="a" style="left:599px;top:146px;line-height:36px;white-space:nowrap"><span style="font-size:30px;font-weight:bold;color:#d6d6d6;background:linear-gradient(#f4f4f4,#b9b9b9);-webkit-background-clip:text;background-clip:text;-webkit-text-fill-color:transparent">43</span><span style="font-size:16px;font-weight:bold;color:#cfcfcf;margin-left:5px">次</span></div><div class="a" style="left:745px;top:146px;line-height:36px;white-space:nowrap"><span style="font-size:30px;font-weight:bold;color:#d6d6d6;background:linear-gradient(#f4f4f4,#b9b9b9);-webkit-background-clip:text;background-clip:text;-webkit-text-fill-color:transparent">1</span><span style="font-size:16px;font-weight:bold;color:#cfcfcf;margin-left:5px">次</span></div><div class="a" style="left:880px;top:146px;line-height:36px;white-space:nowrap"><span style="font-size:30px;font-weight:bold;color:#d6d6d6;background:linear-gradient(#f4f4f4,#b9b9b9);-webkit-background-clip:text;background-clip:text;-webkit-text-fill-color:transparent">6</span><span style="font-size:16px;font-weight:bold;color:#cfcfcf;margin-left:5px">次</span></div><div class="a" style="left:1041px;top:146px;line-height:36px;white-space:nowrap"><span style="font-size:30px;font-weight:bold;color:#d6d6d6;background:linear-gradient(#f4f4f4,#b9b9b9);-webkit-background-clip:text;background-clip:text;-webkit-text-fill-color:transparent">32.26</span><span style="font-size:16px;font-weight:bold;color:#cfcfcf;margin-left:5px">%</span></div><div class="a" style="left:1266px;top:152px;line-height:36px;white-space:nowrap"><span style="font-size:30px;font-weight:bold;color:#d6d6d6;background:linear-gradient(#f4f4f4,#b9b9b9);-webkit-background-clip:text;background-clip:text;-webkit-text-fill-color:transparent">50</span><span style="font-size:16px;font-weight:bold;color:#cfcfcf;margin-left:5px">个</span></div><div class="a" style="left:1472px;top:146px;line-height:36px;white-space:nowrap"><span style="font-size:30px;font-weight:bold;color:#d6d6d6;background:linear-gradient(#f4f4f4,#b9b9b9);-webkit-background-clip:text;background-clip:text;-webkit-text-fill-color:transparent">9</span><span style="font-size:16px;font-weight:bold;color:#cfcfcf;margin-left:5px">个</span></div><div class="a" style="left:1608px;top:146px;line-height:36px;white-space:nowrap"><span style="font-size:30px;font-weight:bold;color:#d6d6d6;background:linear-gradient(#f4f4f4,#b9b9b9);-webkit-background-clip:text;background-clip:text;-webkit-text-fill-color:transparent">4</span><span style="font-size:16px;font-weight:bold;color:#cfcfcf;margin-left:5px">人</span></div><div class="a" style="left:1745px;top:146px;line-height:36px;white-space:nowrap"><span style="font-size:30px;font-weight:bold;color:#d6d6d6;background:linear-gradient(#f4f4f4,#b9b9b9);-webkit-background-clip:text;background-clip:text;-webkit-text-fill-color:transparent">3</span><span style="font-size:16px;font-weight:bold;color:#cfcfcf;margin-left:5px">次</span></div><div class="a" style="left:1422px;top:22px;width:20px;height:22px"><svg width="20" height="22" viewBox="0 0 20 22"><circle cx="10" cy="3.2" r="2.7" fill="#fff"/><path d="M4.6 10.2Q5.5 6.2 10 6.2Q14.5 6.2 15.4 10.2" fill="none" stroke="#fff" stroke-width="1.7"/><path d="M0 9.8H20V13.2H18V21H15L13.9 18H6.1L5 21H2V13.2H0Z" fill="#fff"/></svg></div><div class="a" style="left:1452px;top:17px;font-size:20px;line-height:30px;font-weight:bold;color:#fff">学情分析</div><div class="a" style="left:1860px;top:15px;width:40px;height:40px;border-radius:50%;background:#262626"><svg width="40" height="40" viewBox="0 0 40 40" style="position:absolute;left:0;top:0"><path d="M11 16.5V11H16.5M23.5 11H29V16.5M29 23.5V29H23.5M16.5 29H11V23.5" fill="none" stroke="#eee" stroke-width="2"/></svg></div><div class="a" style="left:1860px;top:858px;width:40px;height:40px;border-radius:50%;background:#2a2a2a"><svg width="40" height="40" viewBox="0 0 40 40" style="position:absolute;left:0;top:0"><path d="M26.5 17V29H12V11H24" fill="none" stroke="#17c3ee" stroke-width="2"/><path d="M16 17H21M16 22H19" stroke="#17c3ee" stroke-width="2"/><path d="M21 23L28 15.5" stroke="#17c3ee" stroke-width="2.2"/></svg></div><div class="a" style="left:1850px;top:903px;width:60px;text-align:center;font-size:12px;line-height:18px;font-weight:bold;color:#c8c8c8">听课评价</div><div class="a" style="left:1860px;top:938px;width:40px;height:128px;border-radius:20px;background:linear-gradient(#3b66f0,#22c8b0)"></div><div class="a" style="left:1866px;top:945px;width:27px;height:26px"><svg width="27" height="26" viewBox="4 6 36 34"><defs><linearGradient id="lg27" x1="0" y1="0" x2="0.35" y2="1"><stop offset="0" stop-color="#eaf6ff"/><stop offset="0.45" stop-color="#8fb4f6"/><stop offset="1" stop-color="#2748d8"/></linearGradient></defs><path d="M15.5 8.8Q16.8 7.2 18 8.6L37.2 28.2Q38.8 30 36.5 30.6L8.5 37.8Q6 38.4 6.8 36Z" fill="url(#lg27)"/><path d="M16.5 12.5L13.4 33.5" stroke="#e9f4ff" stroke-width="2.8" stroke-linecap="round" opacity=".85"/><path d="M18.6 21.5L26.4 31" stroke="#eef2ff" stroke-width="2.6" stroke-linecap="round" opacity=".85"/><path d="M18.8 31.6L23.8 31.2" stroke="#eef2ff" stroke-width="2.6" stroke-linecap="round" opacity=".85"/><path d="M22 15L31.6 29.6" stroke="#e6f0ff" stroke-width="2.2" stroke-linecap="round" opacity=".85"/><circle cx="22" cy="13.2" r="1.8" fill="#fff"/></svg></div><div class="a" style="left:1860px;top:970px;width:40px;text-align:center;font-size:15px;line-height:17px;font-weight:bold;color:#fff;white-space:normal">AI<br>师<br>途<br>智<br>伴</div><div class="a" style="left:556px;top:1040px;width:412px;height:42px;background:#242424"></div><div class="a" style="left:984px;top:1040px;width:412px;height:42px;background:#242424"></div><div class="a" style="left:1420px;top:1040px;width:412px;height:42px;background:#242424"></div><div class="a" style="left:1573px;top:1062px;width:106px;height:20px;background:#3a2a18;clip-path:polygon(0 0,100% 0,85% 100%,15% 100%)"></div><div class="a" style="left:1590px;top:1052px;width:72px;height:30px;border-radius:0 0 8px 8px;background:#d27d22"></div><div class="a" style="left:1590px;top:1056px;width:71px;text-align:center;font-size:16px;line-height:20px;font-weight:bold;color:#f5e6d0">39.49%</div><div class="a" style="left:538px;top:178px;width:1303px;height:888px;background:#23272e;border:2px solid #363636;border-radius:12px;overflow:hidden"></div><div class="a" style="left:585px;top:180px;width:1px;height:882px;background:#30343a"></div><div class="a" style="left:769px;top:180px;width:1px;height:882px;background:#30343a"></div><div class="a" style="left:1322px;top:180px;width:1px;height:882px;background:#30343a"></div><svg class="a" style="left:554px;top:210px" width="16" height="16" viewBox="0 0 16 16"><path d="M10.5 2.5L5 8L10.5 13.5" fill="none" stroke="#ddd" stroke-width="1.6"/></svg><svg class="a" style="left:554px;top:261px" width="18" height="18" viewBox="0 0 18 18"><path d="M3.2 6.2A7 7 0 1 1 2.1 9.5" fill="none" stroke="#ddd" stroke-width="1.5"/><path d="M1.6 2.8L2.6 7.2L6.8 6" fill="none" stroke="#ddd" stroke-width="1.5"/><path d="M9 5V9.2L11.6 11.6" fill="none" stroke="#ddd" stroke-width="1.5"/></svg><svg class="a" style="left:554px;top:313px" width="18" height="18" viewBox="0 0 18 18"><path d="M3 1.5H11L15 5.5V16.5H3Z" fill="none" stroke="#ddd" stroke-width="1.4" stroke-linejoin="round"/><path d="M11 1.5V5.5H15" fill="none" stroke="#ddd" stroke-width="1.2"/><path d="M6 10H12M6 13H12" stroke="#ddd" stroke-width="1.4"/></svg><svg class="a" style="left:553px;top:363px" width="20" height="20" viewBox="0 0 20 20"><path d="M13.2 2.7A7 7 0 1 0 12.8 14.8" fill="none" stroke="#ddd" stroke-width="1.5"/><path d="M7 14.8V18.2H12.6V14.8" fill="none" stroke="#ddd" stroke-width="1.5"/><path d="M15 3L16 6L19 7L16 8L15 11L14 8L11 7L14 6Z" fill="none" stroke="#ddd" stroke-width="1.2" stroke-linejoin="round"/></svg><div class="a" style="left:598px;top:210px;width:6px;height:16px;background:linear-gradient(#3d6ff6,#2bb6f4)"></div><div class="a" style="left:612px;top:206.0px;font-size:18px;line-height:26px;color:#eeeeee;font-weight:bold;">历史记录</div><svg class="a" style="left:738px;top:211px" width="14" height="14" viewBox="0 0 14 14"><path d="M1.5 1.5L12.5 12.5M12.5 1.5L1.5 12.5" stroke="#ddd" stroke-width="1.6"/></svg><div class="a" style="left:598px;top:248px;width:159px;height:40px;border-radius:8px;background:#39a0ec;text-align:center;font-size:14px;line-height:40px;font-weight:bold;color:#fff">新建对话</div><div class="a" style="left:586px;top:300px;width:183px;height:78px;background:#2b2f36"></div><div class="a" style="left:598px;top:309.0px;font-size:16px;line-height:24px;color:#2a90f2;font-weight:500;-webkit-text-stroke:0.25px #2a90f2;">分析学生1-7学业质量</div><div class="a" style="left:598px;top:349.0px;font-size:12px;line-height:20px;color:#9a9a9a;font-weight:500;-webkit-text-stroke:0.25px #9a9a9a;">2025-06-10 10:50:10</div><svg class="a" style="left:738px;top:350px" width="14" height="16" viewBox="0 0 14 16"><path d="M1 3.5H13M5 3.5V1.5H9V3.5M2.5 3.5V14.5H11.5V3.5M5.5 6.5V12M8.5 6.5V12" fill="none" stroke="#6f7276" stroke-width="1.3"/></svg><div class="a" style="left:598px;top:395.0px;font-size:16px;line-height:24px;color:#e4e4e4;font-weight:500;-webkit-text-stroke:0.25px #e4e4e4;">学业质量问题分析</div><div class="a" style="left:598px;top:435.0px;font-size:12px;line-height:20px;color:#707070;font-weight:500;-webkit-text-stroke:0.25px #707070;">2025-06-10 10:48:57</div><div class="a" style="left:598px;top:481.0px;font-size:16px;line-height:24px;color:#e4e4e4;font-weight:500;-webkit-text-stroke:0.25px #e4e4e4;">教学问题精准施策</div><div class="a" style="left:598px;top:521.0px;font-size:12px;line-height:20px;color:#707070;font-weight:500;-webkit-text-stroke:0.25px #707070;">2025-05-28 15:20:11</div><div class="a" style="left:782px;top:210px;width:6px;height:16px;background:linear-gradient(#3d6ff6,#2bb6f4)"></div><div class="a" style="left:796px;top:206.0px;font-size:18px;line-height:26px;color:#eeeeee;font-weight:bold;">教学综合分析报告</div><svg class="a" style="left:1291px;top:211px" width="14" height="14" viewBox="0 0 14 14"><path d="M1.5 1.5L12.5 12.5M12.5 1.5L1.5 12.5" stroke="#ddd" stroke-width="1.6"/></svg><div class="a" style="left:1319px;top:248px;width:4px;height:97px;border-radius:2px;background:#4a4d52"></div><div class="a" style="left:782px;top:248px;width:530px;height:816px;background:#fff;border-radius:10px 10px 0 0;overflow:hidden"><div class="a" style="left:0;top:0;width:530px;height:73px;background:linear-gradient(to right,#ffffff 0%,#ffffff 30%,#e3f2fd 70%,#d6ecfc 100%);border-bottom:1px solid #cfe6fa"></div><svg class="a" style="left:0;top:0" width="530" height="72" viewBox="0 0 530 72"><defs><linearGradient id="pg" x1="0" y1="0" x2="0" y2="1"><stop offset="0" stop-color="#ffffff"/><stop offset="1" stop-color="#a6d6fb"/></linearGradient><linearGradient id="pg3" x1="0" y1="0" x2="0" y2="1"><stop offset="0" stop-color="#dcefff"/><stop offset="0.75" stop-color="#cbe6fd"/><stop offset="1" stop-color="#8fcafa"/></linearGradient><linearGradient id="pg4" x1="0" y1="0" x2="0" y2="1"><stop offset="0" stop-color="#ffffff" stop-opacity=".0"/><stop offset="1" stop-color="#bfe2fc" stop-opacity=".9"/></linearGradient></defs><path d="M432 0H530V40Q527 51 518 51H420Z" fill="url(#pg3)"/><text x="462" y="26" font-size="22" fill="#b9d6ec" fill-opacity=".35" font-weight="bold" transform="skewX(-12) translate(6,0)">量表</text><path d="M283 72L296 27Q298 22.5 303 22.5H474Q481 22.5 480 29L472 72" fill="url(#pg4)" stroke="#ffffff" stroke-width="1.2"/><path d="M296 72L307 34Q309 30 314 30H478Q484 30 483 36L476 72" fill="none" stroke="#ffffff" stroke-width="1.2"/><path d="M386 10.5H469Q476 10.5 475 17.5L463 72H360L378 16Q380 10.5 386 10.5Z" fill="url(#pg)"/><path d="M388 25H452Q456 25 455.2 28.5L454.6 31.7H384Z" fill="#a9d7fb"/><path d="M383 40H410L408.5 46.5H381Z" fill="#aad7fb"/><path d="M411 55L421 52.5L423.5 60L452 44L426 66.5L420.5 67Z" fill="#8fcdfb"/></svg><div class="a" style="left:24px;top:21px;font-size:24px;line-height:32px;font-weight:bold;color:#1294fb">教学综合分析报告</div><div class="a" style="left:20px;top:94.0px;font-size:24px;line-height:36px;color:#2b2b2b;font-weight:bold;">初中物理《简易活塞式抽水机》课堂教学评价</div><div class="a" style="left:20px;top:131.0px;font-size:24px;line-height:36px;color:#2b2b2b;font-weight:bold;">报告</div><div class="a" style="left:20px;top:175px;width:490px;height:2px;background:#d0d0d0"></div><div class="a" style="left:20px;top:194.0px;font-size:20px;line-height:30px;color:#2b2b2b;font-weight:bold;">一、课程概述</div><div class="a" style="left:20px;top:237.6px;font-size:16px;line-height:26px;color:#333;"><b>授课年级：</b>初二</div><div class="a" style="left:20px;top:268.0px;font-size:16px;line-height:26px;color:#333;"><b>学科：</b>物理</div><div class="a" style="left:20px;top:298.0px;font-size:16px;line-height:26px;color:#333;"><b>课型：</b>新授课</div><div class="a" style="left:20px;top:328.3px;font-size:16px;line-height:26px;color:#333;"><b>课堂标题：</b>跨学科实践：简易活塞式抽水机</div><div class="a" style="left:20px;top:358.3px;font-size:16px;line-height:26px;color:#333;"><b>上课时间：</b>2025年5月28日14:17-14:56</div><div class="a" style="left:20px;top:402.4px;font-size:16px;line-height:26px;color:#333;"><b>课堂整体情况：</b></div><div class="a" style="left:20px;top:433.5px;font-size:16px;line-height:26px;color:#333;">本节课以学生自制活塞式抽水机为实践载体，通过工作原理讲解、抽</div><div class="a" style="left:20px;top:463.5px;font-size:16px;line-height:26px;color:#333;">水实验挑战和计算验证三个环节，引导学生理解活塞式抽水机的工作</div><div class="a" style="left:20px;top:493.5px;font-size:16px;line-height:26px;color:#333;">原理及大气压强的应用。课堂采用了"任务驱动+小组合作"的教学模</div><div class="a" style="left:20px;top:523.5px;font-size:16px;line-height:26px;color:#333;">式，结合智慧纸笔和AI评价工具，重点培养学生科学探究能力和工程</div><div class="a" style="left:20px;top:553.5px;font-size:16px;line-height:26px;color:#333;">思维。根据课堂观察记录，老师提问43次，学生上台展示4次，小组</div><div class="a" style="left:20px;top:583.5px;font-size:16px;line-height:26px;color:#333;">活动时间占比约40%，整体课堂互动频繁但存在部分语言表述不规范</div><div class="a" style="left:20px;top:613.5px;font-size:16px;line-height:26px;color:#333;">和组织松散现象。</div><div class="a" style="left:20px;top:657.2px;font-size:20px;line-height:30px;color:#2b2b2b;font-weight:bold;">二、课标落实程度</div><div class="a" style="left:20px;top:700.8px;font-size:18px;line-height:28px;color:#2b2b2b;font-weight:bold;">1. 课标要求（《义务教育物理课程标准(2022年版)》相关要</div><div class="a" style="left:20px;top:729.0px;font-size:18px;line-height:28px;color:#2b2b2b;font-weight:bold;">求）：</div><div class="a" style="left:20px;top:767.7px;font-size:16px;line-height:26px;color:#333;">【物理观念】</div></div><div class="a" style="left:1605px;top:204px;width:175px;height:46px;border-radius:8px;background:#30343b"></div><div class="a" style="left:1617px;top:216.0px;font-size:16px;line-height:24px;color:#e8e8e8;font-weight:500;-webkit-text-stroke:0.25px #e8e8e8;">分析学生1-7学业质量</div><div class="a" style="left:1792px;top:204px;width:32px;height:32px;border-radius:50%;background:#0a98fc"><svg width="32" height="32" viewBox="0 0 32 32" style="position:absolute;left:0;top:0"><circle cx="16" cy="12.2" r="5.2" fill="none" stroke="#fff" stroke-width="2"/><path d="M9 23.5L16 19.8L23 23.5" fill="none" stroke="#fff" stroke-width="2"/></svg></div><div class="a" style="left:1340px;top:272px;width:36px;height:34px"><svg width="36" height="34" viewBox="4 6 36 34"><defs><linearGradient id="lg36" x1="0" y1="0" x2="0.35" y2="1"><stop offset="0" stop-color="#eaf6ff"/><stop offset="0.45" stop-color="#8fb4f6"/><stop offset="1" stop-color="#2748d8"/></linearGradient></defs><path d="M15.5 8.8Q16.8 7.2 18 8.6L37.2 28.2Q38.8 30 36.5 30.6L8.5 37.8Q6 38.4 6.8 36Z" fill="url(#lg36)"/><path d="M16.5 12.5L13.4 33.5" stroke="#e9f4ff" stroke-width="2.8" stroke-linecap="round" opacity=".85"/><path d="M18.6 21.5L26.4 31" stroke="#eef2ff" stroke-width="2.6" stroke-linecap="round" opacity=".85"/><path d="M18.8 31.6L23.8 31.2" stroke="#eef2ff" stroke-width="2.6" stroke-linecap="round" opacity=".85"/><path d="M22 15L31.6 29.6" stroke="#e6f0ff" stroke-width="2.2" stroke-linecap="round" opacity=".85"/><circle cx="22" cy="13.2" r="1.8" fill="#fff"/></svg></div><div class="a" style="left:1386px;top:274px;width:394px;height:636px;border-radius:8px 8px 0 0;background:#2f333a"></div><div class="a" style="left:1398px;top:286.0px;font-size:16px;line-height:24px;color:#e9e9e9;font-weight:500;-webkit-text-stroke:0.25px #e9e9e9;">根据课堂观察和学生1-7的表现，其学业质量分析如</div><div class="a" style="left:1398px;top:316.0px;font-size:16px;line-height:24px;color:#e9e9e9;font-weight:500;-webkit-text-stroke:0.25px #e9e9e9;">下：</div><div class="a" style="left:1418px;top:351.0px;font-size:16px;line-height:24px;color:#e9e9e9;font-weight:bold;">概念理解水平：</div><div class="a" style="left:1418px;top:392.3px;font-size:16px;line-height:24px;color:#e9e9e9;font-weight:500;-webkit-text-stroke:0.25px #e9e9e9;">展现出对大气压强原理的准确理解，能在38分17</div><div class="a" style="left:1418px;top:417.6px;font-size:16px;line-height:24px;color:#e9e9e9;font-weight:500;-webkit-text-stroke:0.25px #e9e9e9;">秒正确推导抽水机最大高度计算公式（h=P/ρg），</div><div class="a" style="left:1418px;top:443.0px;font-size:16px;line-height:24px;color:#e9e9e9;font-weight:500;-webkit-text-stroke:0.25px #e9e9e9;">并能解释"水柱压强<svg width=16 height=16 viewBox="0 0 16 16" style="vertical-align:-2px"><path d="M13.5 2.5L2.5 7.5L13.5 12M2.5 10.5L13.5 15" fill=none stroke="#e9e9e9" stroke-width="1.3"/></svg>大气压"的临界条件（37分1</div><div class="a" style="left:1418px;top:468.3px;font-size:16px;line-height:24px;color:#e9e9e9;font-weight:500;-webkit-text-stroke:0.25px #e9e9e9;">8秒发言）。</div><div class="a" style="left:1418px;top:499.0px;font-size:16px;line-height:24px;color:#e9e9e9;font-weight:500;-webkit-text-stroke:0.25px #e9e9e9;">但原理表述存在不严谨处，如37分39秒用"压</div><div class="a" style="left:1418px;top:525.0px;font-size:16px;line-height:24px;color:#e9e9e9;font-weight:500;-webkit-text-stroke:0.25px #e9e9e9;">扯"描述压强作用，显示物理术语规范化需加强。</div><div class="a" style="left:1418px;top:564.6px;font-size:16px;line-height:24px;color:#e9e9e9;font-weight:bold;">科学探究能力：</div><div class="a" style="left:1418px;top:606.4px;font-size:16px;line-height:24px;color:#e9e9e9;font-weight:500;-webkit-text-stroke:0.25px #e9e9e9;">具备定量分析能力：通过压强公式将抽象原理转</div><div class="a" style="left:1418px;top:631.6px;font-size:16px;line-height:24px;color:#e9e9e9;font-weight:500;-webkit-text-stroke:0.25px #e9e9e9;">化为具体计算（38分05秒完成单位换算和数值计</div><div class="a" style="left:1418px;top:657.0px;font-size:16px;line-height:24px;color:#e9e9e9;font-weight:500;-webkit-text-stroke:0.25px #e9e9e9;">算）。</div><div class="a" style="left:1418px;top:687.5px;font-size:16px;line-height:24px;color:#e9e9e9;font-weight:500;-webkit-text-stroke:0.25px #e9e9e9;">逻辑链条完整：从现象<svg width=16 height=16 viewBox="0 0 16 16" style="vertical-align:-2px"><path d="M1 8.5H14.5M11 5.5L14.5 8.5L11 11.5" fill=none stroke="#e9e9e9" stroke-width="1.4"/></svg>原理<svg width=16 height=16 viewBox="0 0 16 16" style="vertical-align:-2px"><path d="M1 8.5H14.5M11 5.5L14.5 8.5L11 11.5" fill=none stroke="#e9e9e9" stroke-width="1.4"/></svg>公式<svg width=16 height=16 viewBox="0 0 16 16" style="vertical-align:-2px"><path d="M1 8.5H14.5M11 5.5L14.5 8.5L11 11.5" fill=none stroke="#e9e9e9" stroke-width="1.4"/></svg>应用的推</div><div class="a" style="left:1418px;top:713.0px;font-size:16px;line-height:24px;color:#e9e9e9;font-weight:500;-webkit-text-stroke:0.25px #e9e9e9;">导过程清晰（37分15秒-38分17秒），符合课标3.</div><div class="a" style="left:1418px;top:739.0px;font-size:16px;line-height:24px;color:#e9e9e9;font-weight:500;-webkit-text-stroke:0.25px #e9e9e9;">2.4的科学思维要求。</div><div class="a" style="left:1418px;top:779.0px;font-size:16px;line-height:24px;color:#e9e9e9;font-weight:bold;">实践应用表现：</div><div class="a" style="left:1418px;top:820.2px;font-size:16px;line-height:24px;color:#e9e9e9;font-weight:500;-webkit-text-stroke:0.25px #e9e9e9;">课堂参与积极：是少数完成理论计算挑战的学生</div><div class="a" style="left:1418px;top:845.8px;font-size:16px;line-height:24px;color:#e9e9e9;font-weight:500;-webkit-text-stroke:0.25px #e9e9e9;">（36分37秒活动），且主动上台演示推导过程（37</div><div class="a" style="left:1418px;top:871.0px;font-size:16px;line-height:24px;color:#e9e9e9;font-weight:500;-webkit-text-stroke:0.25px #e9e9e9;">分08秒）。</div><div class="a" style="left:1418px;top:900.0px;font-size:16px;line-height:24px;color:#e9e9e9;font-weight:500;-webkit-text-stroke:0.25px #e9e9e9;">存在改进空间：未观察到其参与协作小组改进讨论</div><div class="a" style="left:1324px;top:910px;width:515px;height:152px;background:#23272e"></div><div class="a" style="left:1336px;top:922px;width:158px;height:32px;border:1px solid #4a4e54;border-radius:8px"></div><div class="a" style="left:1369px;top:927.8px;font-size:14px;line-height:20px;color:#dedede;font-weight:500;-webkit-text-stroke:0.25px #dedede;">教学问题精准施策</div><svg class="a" style="left:1350px;top:929px" width="16" height="16" viewBox="0 0 16 16"><circle cx="7" cy="5" r="3.2" fill="none" stroke="#ddd" stroke-width="1.3"/><path d="M1.5 15Q2 9.5 7 9.5Q8.5 9.5 9.5 10" fill="none" stroke="#ddd" stroke-width="1.3"/><path d="M12 10L12.8 11.8L14.7 12L13.3 13.3L13.7 15.2L12 14.2L10.3 15.2L10.7 13.3L9.3 12L11.2 11.8Z" fill="#ddd"/></svg><div class="a" style="left:1506px;top:922px;width:158px;height:32px;border:1px solid #4a4e54;border-radius:8px"></div><div class="a" style="left:1539px;top:927.8px;font-size:14px;line-height:20px;color:#dedede;font-weight:500;-webkit-text-stroke:0.25px #dedede;">学业质量问题分析</div><svg class="a" style="left:1520px;top:929px" width="16" height="16" viewBox="0 0 16 16"><path d="M3 1.5H10L13 4.5V14.5H3Z" fill="none" stroke="#ddd" stroke-width="1.3"/><path d="M6 12V8M8 12V6M10 12V9" stroke="#ddd" stroke-width="1.3"/></svg><div class="a" style="left:1676px;top:922px;width:116px;height:32px;border:1px solid #4a4e54;border-radius:8px"></div><div class="a" style="left:1709px;top:927.8px;font-size:14px;line-height:20px;color:#dedede;font-weight:500;-webkit-text-stroke:0.25px #dedede;">教学一致性</div><svg class="a" style="left:1690px;top:929px" width="16" height="16" viewBox="0 0 16 16"><path d="M8 1.5L14.5 5L8 8.5L1.5 5Z" fill="none" stroke="#ddd" stroke-width="1.3" stroke-linejoin="round"/><path d="M1.5 8L8 11.5L14.5 8M1.5 11L8 14.5L14.5 11" fill="none" stroke="#ddd" stroke-width="1.3" stroke-linejoin="round"/></svg><div class="a" style="left:1336px;top:966px;width:492px;height:58px;border:1px solid #50545a;border-radius:8px;background:#393d43"></div><svg class="a" style="left:1354px;top:982px" width="30" height="26" viewBox="0 0 30 26"><path d="M17 23H2V2H10L13 6H26V12" fill="none" stroke="#eee" stroke-width="2"/><path d="M23 25V15M19.5 18.5L23 15L26.5 18.5" fill="none" stroke="#eee" stroke-width="1.8"/></svg><div class="a" style="left:1399px;top:984.0px;font-size:16px;line-height:24px;color:#9a9c9f;font-weight:500;-webkit-text-stroke:0.25px #9a9c9f;">请输入内容进行分析</div><div class="a" style="left:1780px;top:979px;width:32px;height:32px;border-radius:50%;background:#eeeeee"><svg width="32" height="32" viewBox="0 0 32 32" style="position:absolute;left:0;top:0"><path d="M23.5 8.5L8 14.8L14.5 17.5L17.2 24Z" fill="#222"/><path d="M23.5 8.5L14.5 17.5" stroke="#eee" stroke-width="1.3"/></svg></div><div class="a" style="left:1485px;top:1038.5px;font-size:12px;line-height:18px;color:#7a7c80;font-weight:500;-webkit-text-stroke:0.25px #7a7c80;">以上内容均由AI生成,仅供参考和借鉴</div></div></body></html>
